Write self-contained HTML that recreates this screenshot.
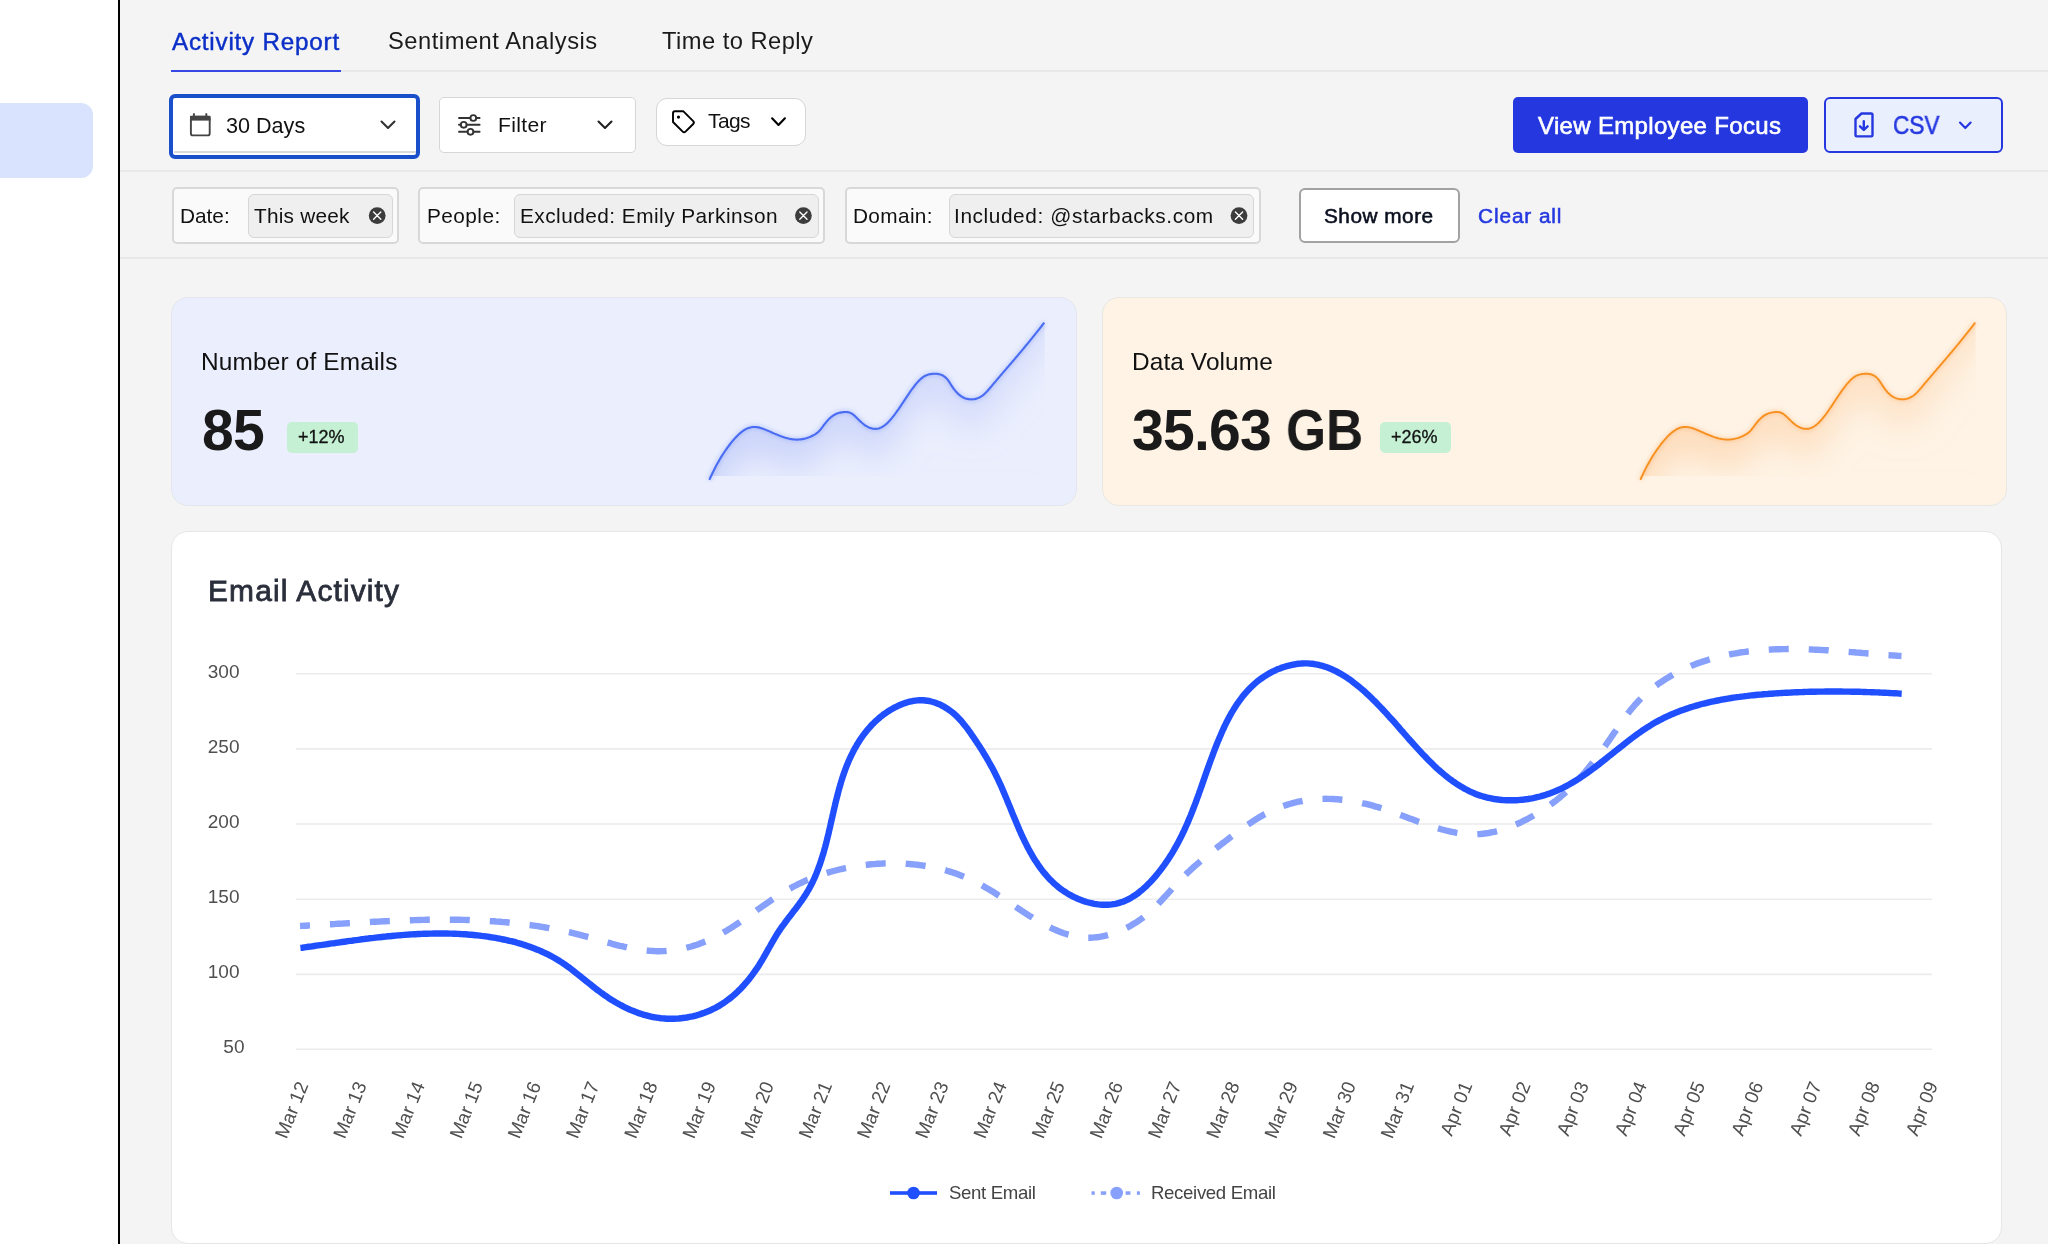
<!DOCTYPE html>
<html><head><meta charset="utf-8">
<style>
*{margin:0;padding:0;box-sizing:border-box}
html,body{width:2048px;height:1244px;overflow:hidden;background:#f4f4f4;font-family:"Liberation Sans",sans-serif;color:#111}
.a{position:absolute}
.t{position:absolute;white-space:nowrap;line-height:1;will-change:transform}
.sep{position:absolute;left:120px;width:1928px;height:2px;background:#e8e8e8}
.sb{-webkit-text-stroke:0.55px currentColor}
.mb{-webkit-text-stroke:0.3px currentColor}
</style></head><body>
<!-- sidebar -->
<div class="a" style="left:0;top:0;width:118px;height:1244px;background:#fff"></div>
<div class="a" style="left:-20px;top:103px;width:113px;height:75px;background:#dae3fd;border-radius:12px"></div>
<div class="a" style="left:118px;top:0;width:2px;height:1244px;background:#000"></div>

<!-- tabs -->
<div class="a" style="left:171px;top:70px;width:1877px;height:2px;background:#e8e8e8"></div>
<div class="a" style="left:171px;top:69.5px;width:170px;height:2.5px;background:#3548e6"></div>
<div class="t" style="left:172px;top:29.6px;font-size:24.2px;letter-spacing:0.8px;color:#0b2fc7;-webkit-text-stroke:0.45px #0b2fc7">Activity Report</div>
<div class="t" style="left:388px;top:30px;font-size:23.7px;letter-spacing:0.53px;color:#1a1a1a">Sentiment Analysis</div>
<div class="t" style="left:662px;top:30px;font-size:23.7px;letter-spacing:0.47px;color:#1a1a1a">Time to Reply</div>

<!-- toolbar -->
<div class="sep" style="top:170px"></div>
<div class="a" style="left:169px;top:93.5px;width:251px;height:65.5px;border:4.5px solid #1a4fcc;border-radius:6px;background:#fff"></div>
<div class="a" style="left:173.5px;top:151px;width:242px;height:1.5px;background:#d9d9d9"></div>
<svg class="a" style="left:180px;top:100px" width="40" height="50" viewBox="180 100 40 50">
 <rect x="190.9" y="116.6" width="18.8" height="18.8" rx="2" fill="none" stroke="#444" stroke-width="1.9"/>
 <rect x="190" y="115.8" width="20.5" height="4.8" fill="#444"/>
 <path d="M193.9 113.2V117M206.3 113.2V117" stroke="#444" stroke-width="1.9"/>
</svg>
<div class="t" style="left:226px;top:114.5px;font-size:21.6px;color:#111">30 Days</div>
<svg class="a" style="left:370px;top:110px" width="40" height="30" viewBox="370 110 40 30"><path d="M381.5 121.5L388 128L394.5 121.5" fill="none" stroke="#333" stroke-width="2.1" stroke-linecap="round" stroke-linejoin="round"/></svg>

<div class="a" style="left:438.5px;top:97px;width:197px;height:55.5px;border:1.5px solid #d6d6d6;border-radius:5px;background:#fff"></div>
<svg class="a" style="left:450px;top:100px" width="40" height="50" viewBox="450 100 40 50" fill="none" stroke="#333" stroke-width="1.9" stroke-linecap="round">
 <path d="M459 118H470.3M476.3 118H479.6"/>
 <path d="M459 124.8H460.7M466.7 124.8H479.6"/>
 <path d="M459 131.8H467.5M473.5 131.8H479.6"/>
 <circle cx="473.3" cy="118" r="2.9"/><circle cx="463.7" cy="124.8" r="2.9"/><circle cx="470.5" cy="131.8" r="2.9"/>
</svg>
<div class="t" style="left:497.8px;top:114px;font-size:21.1px;letter-spacing:0.32px;color:#111">Filter</div>
<svg class="a" style="left:590px;top:110px" width="30" height="30" viewBox="590 110 30 30"><path d="M598.5 121.5L605 128L611.5 121.5" fill="none" stroke="#222" stroke-width="2.1" stroke-linecap="round" stroke-linejoin="round"/></svg>

<div class="a" style="left:656px;top:97.5px;width:150px;height:48.5px;border:1.5px solid #d6d6d6;border-radius:11px;background:#fff"></div>
<svg class="a" style="left:660px;top:100px" width="40" height="40" viewBox="660 100 40 40">
 <path d="M673 113.2Q673 111.2 675 111.2H683.2L693.2 121.2Q694.6 122.6 693.2 124L685.5 131.7Q684.1 133.1 682.7 131.7L673 122Z" fill="none" stroke="#000" stroke-width="1.9" stroke-linejoin="round"/>
 <circle cx="678.5" cy="117.1" r="1.6" fill="#000"/>
</svg>
<div class="t" style="left:708px;top:111.2px;font-size:20.95px;letter-spacing:-0.57px;color:#111">Tags</div>
<svg class="a" style="left:765px;top:110px" width="30" height="30" viewBox="765 110 30 30"><path d="M772.1 118.3L778.5 124.9L784.9 118.3" fill="none" stroke="#000" stroke-width="2.1" stroke-linecap="round" stroke-linejoin="round"/></svg>

<div class="a" style="left:1512.5px;top:97px;width:295px;height:55.5px;background:#2538e0;border-radius:5px"></div>
<div class="t" style="left:1538px;top:114.2px;font-size:24px;letter-spacing:0.33px;color:#fff;-webkit-text-stroke:0.6px #fff">View Employee Focus</div>
<div class="a" style="left:1823.5px;top:97px;width:179px;height:55.5px;background:#eaeffd;border:2px solid #2538e0;border-radius:6px"></div>
<svg class="a" style="left:1845px;top:105px" width="40" height="40" viewBox="1845 105 40 40" fill="none" stroke="#2538e0" stroke-width="2.4" stroke-linejoin="round" stroke-linecap="round">
 <path d="M1855.5 119L1861.5 113.5H1871.2Q1872.5 113.5 1872.5 114.8V135.2Q1872.5 136.4 1871.2 136.4H1856.8Q1855.5 136.4 1855.5 135.2Z"/>
 <path d="M1863.8 121.3V129M1860 126.3L1863.8 130L1867.6 126.3"/>
</svg>
<div class="t sb" style="left:1892.5px;top:113.3px;font-size:25px;color:#2538e0;transform:scaleX(0.905);transform-origin:0 0">CSV</div>
<svg class="a" style="left:1950px;top:110px" width="30" height="30" viewBox="1950 110 30 30"><path d="M1960 122.6L1965.3 128L1970.6 122.6" fill="none" stroke="#2538e0" stroke-width="2.2" stroke-linecap="round" stroke-linejoin="round"/></svg>

<!-- filter chips -->
<div class="sep" style="top:257px"></div>
<div class="a" style="left:171.5px;top:187px;width:227px;height:56.5px;background:#fafafa;border:2px solid #d8d8d8;border-radius:5px"></div>
<div class="a" style="left:247.5px;top:193.5px;width:145px;height:44px;background:#efefef;border:1.5px solid #d6d6d6;border-radius:6px"></div>
<div class="t" style="left:180px;top:205.9px;font-size:20.8px;color:#111">Date:</div>
<div class="t" style="left:254px;top:205.9px;font-size:20.8px;letter-spacing:0.22px;color:#111">This week</div>

<div class="a" style="left:418px;top:187px;width:407px;height:56.5px;background:#fafafa;border:2px solid #d8d8d8;border-radius:5px"></div>
<div class="a" style="left:514px;top:193.5px;width:304.5px;height:44px;background:#efefef;border:1.5px solid #d6d6d6;border-radius:6px"></div>
<div class="t" style="left:427px;top:205.9px;font-size:20.8px;letter-spacing:0.45px;color:#111">People:</div>
<div class="t" style="left:520px;top:205.9px;font-size:20.8px;letter-spacing:0.47px;color:#111">Excluded: Emily Parkinson</div>

<div class="a" style="left:845px;top:187px;width:415.5px;height:56.5px;background:#fafafa;border:2px solid #d8d8d8;border-radius:5px"></div>
<div class="a" style="left:948.5px;top:193.5px;width:305.5px;height:44px;background:#efefef;border:1.5px solid #d6d6d6;border-radius:6px"></div>
<div class="t" style="left:853px;top:205.9px;font-size:20.8px;letter-spacing:0.35px;color:#111">Domain:</div>
<div class="t" style="left:954px;top:205.9px;font-size:20.8px;letter-spacing:0.6px;color:#111">Included: @starbacks.com</div>

<svg class="a" style="left:0;top:180px" width="1300" height="70" viewBox="0 180 1300 70">
 <g fill="#3c3c3c"><circle cx="377.2" cy="215.6" r="8.4"/><circle cx="803.4" cy="215.6" r="8.4"/><circle cx="1239" cy="215.6" r="8.4"/></g>
 <g stroke="#fff" stroke-width="1.35" stroke-linecap="round">
  <path d="M373.6 212L380.8 219.2M380.8 212L373.6 219.2"/>
  <path d="M799.8 212L807 219.2M807 212L799.8 219.2"/>
  <path d="M1235.4 212L1242.6 219.2M1242.6 212L1235.4 219.2"/>
 </g>
</svg>

<div class="a" style="left:1298.5px;top:187.5px;width:161px;height:55.5px;background:#fff;border:2px solid #a2a2a2;border-radius:6px"></div>
<div class="t sb" style="left:1324px;top:205.9px;font-size:20.8px;letter-spacing:0.5px;color:#0a0f1e">Show more</div>
<div class="t sb" style="left:1478px;top:205.9px;font-size:20.8px;letter-spacing:0.9px;color:#2538e0">Clear all</div>

<!-- KPI cards -->
<div class="a" style="left:171px;top:296.5px;width:905.5px;height:209px;background:#eaeefd;border:1.5px solid #e3e6ee;border-radius:17px"></div>
<div class="a" style="left:1102px;top:296.5px;width:905px;height:209px;background:#fef3e5;border:1.5px solid #e9e7e3;border-radius:17px"></div>

<svg class="a" style="left:0;top:280px" width="2048" height="230" viewBox="0 280 2048 230">
 <defs>
  <linearGradient id="g1" gradientUnits="userSpaceOnUse" x1="709" y1="0" x2="1045" y2="0">
   <stop offset="0" stop-color="#cbd4fa" stop-opacity="1"/>
   <stop offset="1" stop-color="#cbd4fa" stop-opacity="0.55"/>
  </linearGradient>
  <linearGradient id="g2" gradientUnits="userSpaceOnUse" x1="1640" y1="0" x2="1976" y2="0">
   <stop offset="0" stop-color="#fdd9b5" stop-opacity="0.85"/>
   <stop offset="1" stop-color="#fdd9b5" stop-opacity="0.5"/>
  </linearGradient>
  <filter id="fd" x="-5%" y="-5%" width="110%" height="140%">
   <feOffset in="SourceAlpha" dy="30" result="off"/>
   <feComponentTransfer in="off" result="offs"><feFuncA type="linear" slope="20"/></feComponentTransfer>
   <feGaussianBlur in="offs" stdDeviation="15" result="bl"/>
   <feComposite in="SourceGraphic" in2="bl" operator="out"/>
  </filter>
  <filter id="blur2" x="-10%" y="-10%" width="120%" height="120%"><feGaussianBlur stdDeviation="2.2"/></filter>
 </defs>
 <clipPath id="c1"><rect x="700" y="300" width="344.6" height="200"/></clipPath><g clip-path="url(#c1)"><path d="M709.4,479.8 L710.4,477.5 L711.4,475.4 L712.4,473.2 L713.4,471.2 L714.4,469.2 L715.4,467.2 L716.4,465.3 L717.4,463.5 L718.4,461.7 L719.4,460.0 L720.4,458.3 L721.4,456.6 L722.4,455.0 L723.4,453.5 L724.4,452.0 L725.4,450.5 L726.4,449.1 L727.4,447.7 L728.4,446.3 L729.4,445.0 L730.4,443.7 L731.4,442.4 L732.4,441.2 L733.4,440.0 L734.4,438.9 L735.4,437.8 L736.4,436.7 L737.4,435.7 L738.4,434.7 L739.4,433.8 L740.4,432.9 L741.4,432.1 L742.4,431.4 L743.4,430.7 L744.4,430.0 L745.4,429.4 L746.4,428.9 L747.4,428.4 L748.4,428.0 L749.4,427.7 L750.4,427.4 L751.4,427.2 L752.4,427.0 L753.4,427.0 L754.4,427.0 L755.4,427.0 L756.4,427.1 L757.4,427.2 L758.4,427.4 L759.4,427.6 L760.4,427.9 L761.4,428.2 L762.4,428.5 L763.4,428.9 L764.4,429.2 L765.4,429.6 L766.4,430.1 L767.4,430.5 L768.4,430.9 L769.4,431.4 L770.4,431.8 L771.4,432.2 L772.4,432.7 L773.4,433.1 L774.4,433.6 L775.4,434.0 L776.4,434.4 L777.4,434.8 L778.4,435.2 L779.4,435.6 L780.4,436.0 L781.4,436.4 L782.4,436.8 L783.4,437.1 L784.4,437.4 L785.4,437.8 L786.4,438.0 L787.4,438.3 L788.4,438.6 L789.4,438.8 L790.4,439.0 L791.4,439.1 L792.4,439.3 L793.4,439.4 L794.4,439.5 L795.4,439.5 L796.4,439.6 L797.4,439.6 L798.4,439.5 L799.4,439.5 L800.4,439.4 L801.4,439.3 L802.4,439.1 L803.4,438.9 L804.4,438.7 L805.4,438.4 L806.4,438.2 L807.4,437.8 L808.4,437.5 L809.4,437.1 L810.4,436.7 L811.4,436.2 L812.4,435.8 L813.4,435.2 L814.4,434.7 L815.4,434.1 L816.4,433.4 L817.4,432.7 L818.4,431.8 L819.4,430.8 L820.4,429.7 L821.4,428.4 L822.4,427.1 L823.4,425.7 L824.4,424.4 L825.4,423.1 L826.4,421.8 L827.4,420.7 L828.4,419.6 L829.4,418.6 L830.4,417.7 L831.4,416.8 L832.4,416.1 L833.4,415.4 L834.4,414.8 L835.4,414.3 L836.4,413.8 L837.4,413.4 L838.4,413.1 L839.4,412.8 L840.4,412.6 L841.4,412.4 L842.4,412.2 L843.4,412.1 L844.4,412.0 L845.4,412.0 L846.4,412.0 L847.4,412.1 L848.4,412.2 L849.4,412.5 L850.4,412.9 L851.4,413.4 L852.4,414.0 L853.4,414.7 L854.4,415.6 L855.4,416.5 L856.4,417.4 L857.4,418.4 L858.4,419.4 L859.4,420.4 L860.4,421.4 L861.4,422.3 L862.4,423.2 L863.4,424.0 L864.4,424.8 L865.4,425.5 L866.4,426.1 L867.4,426.7 L868.4,427.2 L869.4,427.7 L870.4,428.0 L871.4,428.3 L872.4,428.6 L873.4,428.7 L874.4,428.8 L875.4,428.9 L876.4,428.8 L877.4,428.7 L878.4,428.5 L879.4,428.2 L880.4,427.8 L881.4,427.4 L882.4,426.8 L883.4,426.2 L884.4,425.5 L885.4,424.7 L886.4,423.9 L887.4,423.0 L888.4,422.0 L889.4,420.9 L890.4,419.8 L891.4,418.6 L892.4,417.4 L893.4,416.2 L894.4,414.9 L895.4,413.5 L896.4,412.1 L897.4,410.7 L898.4,409.3 L899.4,407.8 L900.4,406.3 L901.4,404.9 L902.4,403.3 L903.4,401.8 L904.4,400.3 L905.4,398.8 L906.4,397.3 L907.4,395.8 L908.4,394.3 L909.4,392.9 L910.4,391.4 L911.4,390.0 L912.4,388.6 L913.4,387.3 L914.4,386.0 L915.4,384.7 L916.4,383.5 L917.4,382.4 L918.4,381.3 L919.4,380.2 L920.4,379.3 L921.4,378.4 L922.4,377.6 L923.4,376.9 L924.4,376.2 L925.4,375.7 L926.4,375.3 L927.4,374.9 L928.4,374.6 L929.4,374.3 L930.4,374.1 L931.4,374.0 L932.4,373.9 L933.4,373.8 L934.4,373.8 L935.4,373.8 L936.4,373.8 L937.4,373.9 L938.4,374.0 L939.4,374.2 L940.4,374.5 L941.4,374.9 L942.4,375.3 L943.4,375.9 L944.4,376.5 L945.4,377.4 L946.4,378.3 L947.4,379.4 L948.4,380.7 L949.4,382.2 L950.4,383.7 L951.4,385.4 L952.4,386.9 L953.4,388.4 L954.4,389.7 L955.4,390.9 L956.4,392.1 L957.4,393.1 L958.4,394.1 L959.4,394.9 L960.4,395.7 L961.4,396.4 L962.4,397.0 L963.4,397.5 L964.4,398.0 L965.4,398.4 L966.4,398.7 L967.4,398.9 L968.4,399.1 L969.4,399.3 L970.4,399.3 L971.4,399.4 L972.4,399.3 L973.4,399.2 L974.4,399.1 L975.4,398.9 L976.4,398.7 L977.4,398.3 L978.4,397.9 L979.4,397.5 L980.4,396.9 L981.4,396.3 L982.4,395.7 L983.4,394.9 L984.4,394.0 L985.4,393.1 L986.4,392.1 L987.4,391.0 L988.4,389.8 L989.4,388.7 L990.4,387.5 L991.4,386.3 L992.4,385.1 L993.4,383.9 L994.4,382.7 L995.4,381.6 L996.4,380.4 L997.4,379.2 L998.4,378.0 L999.4,376.9 L1000.4,375.7 L1001.4,374.5 L1002.4,373.4 L1003.4,372.2 L1004.4,371.0 L1005.4,369.9 L1006.4,368.7 L1007.4,367.5 L1008.4,366.4 L1009.4,365.2 L1010.4,364.0 L1011.4,362.9 L1012.4,361.7 L1013.4,360.5 L1014.4,359.4 L1015.4,358.2 L1016.4,357.0 L1017.4,355.8 L1018.4,354.6 L1019.4,353.4 L1020.4,352.3 L1021.4,351.1 L1022.4,349.9 L1023.4,348.7 L1024.4,347.5 L1025.4,346.2 L1026.4,345.0 L1027.4,343.8 L1028.4,342.6 L1029.4,341.4 L1030.4,340.1 L1031.4,338.9 L1032.4,337.7 L1033.4,336.4 L1034.4,335.2 L1035.4,333.9 L1036.4,332.7 L1037.4,331.4 L1038.4,330.1 L1039.4,328.9 L1040.4,327.6 L1041.4,326.3 L1042.4,325.0 L1043.4,323.7 L1044.2,322.7 L1104.2,250.7 L1104.2,516.0 L1044.2,476.0 L709.4,476.0 Z" fill="url(#g1)" filter="url(#fd)"/></g>
 <path d="M709.4,479.8 L710.4,477.5 L711.4,475.4 L712.4,473.2 L713.4,471.2 L714.4,469.2 L715.4,467.2 L716.4,465.3 L717.4,463.5 L718.4,461.7 L719.4,460.0 L720.4,458.3 L721.4,456.6 L722.4,455.0 L723.4,453.5 L724.4,452.0 L725.4,450.5 L726.4,449.1 L727.4,447.7 L728.4,446.3 L729.4,445.0 L730.4,443.7 L731.4,442.4 L732.4,441.2 L733.4,440.0 L734.4,438.9 L735.4,437.8 L736.4,436.7 L737.4,435.7 L738.4,434.7 L739.4,433.8 L740.4,432.9 L741.4,432.1 L742.4,431.4 L743.4,430.7 L744.4,430.0 L745.4,429.4 L746.4,428.9 L747.4,428.4 L748.4,428.0 L749.4,427.7 L750.4,427.4 L751.4,427.2 L752.4,427.0 L753.4,427.0 L754.4,427.0 L755.4,427.0 L756.4,427.1 L757.4,427.2 L758.4,427.4 L759.4,427.6 L760.4,427.9 L761.4,428.2 L762.4,428.5 L763.4,428.9 L764.4,429.2 L765.4,429.6 L766.4,430.1 L767.4,430.5 L768.4,430.9 L769.4,431.4 L770.4,431.8 L771.4,432.2 L772.4,432.7 L773.4,433.1 L774.4,433.6 L775.4,434.0 L776.4,434.4 L777.4,434.8 L778.4,435.2 L779.4,435.6 L780.4,436.0 L781.4,436.4 L782.4,436.8 L783.4,437.1 L784.4,437.4 L785.4,437.8 L786.4,438.0 L787.4,438.3 L788.4,438.6 L789.4,438.8 L790.4,439.0 L791.4,439.1 L792.4,439.3 L793.4,439.4 L794.4,439.5 L795.4,439.5 L796.4,439.6 L797.4,439.6 L798.4,439.5 L799.4,439.5 L800.4,439.4 L801.4,439.3 L802.4,439.1 L803.4,438.9 L804.4,438.7 L805.4,438.4 L806.4,438.2 L807.4,437.8 L808.4,437.5 L809.4,437.1 L810.4,436.7 L811.4,436.2 L812.4,435.8 L813.4,435.2 L814.4,434.7 L815.4,434.1 L816.4,433.4 L817.4,432.7 L818.4,431.8 L819.4,430.8 L820.4,429.7 L821.4,428.4 L822.4,427.1 L823.4,425.7 L824.4,424.4 L825.4,423.1 L826.4,421.8 L827.4,420.7 L828.4,419.6 L829.4,418.6 L830.4,417.7 L831.4,416.8 L832.4,416.1 L833.4,415.4 L834.4,414.8 L835.4,414.3 L836.4,413.8 L837.4,413.4 L838.4,413.1 L839.4,412.8 L840.4,412.6 L841.4,412.4 L842.4,412.2 L843.4,412.1 L844.4,412.0 L845.4,412.0 L846.4,412.0 L847.4,412.1 L848.4,412.2 L849.4,412.5 L850.4,412.9 L851.4,413.4 L852.4,414.0 L853.4,414.7 L854.4,415.6 L855.4,416.5 L856.4,417.4 L857.4,418.4 L858.4,419.4 L859.4,420.4 L860.4,421.4 L861.4,422.3 L862.4,423.2 L863.4,424.0 L864.4,424.8 L865.4,425.5 L866.4,426.1 L867.4,426.7 L868.4,427.2 L869.4,427.7 L870.4,428.0 L871.4,428.3 L872.4,428.6 L873.4,428.7 L874.4,428.8 L875.4,428.9 L876.4,428.8 L877.4,428.7 L878.4,428.5 L879.4,428.2 L880.4,427.8 L881.4,427.4 L882.4,426.8 L883.4,426.2 L884.4,425.5 L885.4,424.7 L886.4,423.9 L887.4,423.0 L888.4,422.0 L889.4,420.9 L890.4,419.8 L891.4,418.6 L892.4,417.4 L893.4,416.2 L894.4,414.9 L895.4,413.5 L896.4,412.1 L897.4,410.7 L898.4,409.3 L899.4,407.8 L900.4,406.3 L901.4,404.9 L902.4,403.3 L903.4,401.8 L904.4,400.3 L905.4,398.8 L906.4,397.3 L907.4,395.8 L908.4,394.3 L909.4,392.9 L910.4,391.4 L911.4,390.0 L912.4,388.6 L913.4,387.3 L914.4,386.0 L915.4,384.7 L916.4,383.5 L917.4,382.4 L918.4,381.3 L919.4,380.2 L920.4,379.3 L921.4,378.4 L922.4,377.6 L923.4,376.9 L924.4,376.2 L925.4,375.7 L926.4,375.3 L927.4,374.9 L928.4,374.6 L929.4,374.3 L930.4,374.1 L931.4,374.0 L932.4,373.9 L933.4,373.8 L934.4,373.8 L935.4,373.8 L936.4,373.8 L937.4,373.9 L938.4,374.0 L939.4,374.2 L940.4,374.5 L941.4,374.9 L942.4,375.3 L943.4,375.9 L944.4,376.5 L945.4,377.4 L946.4,378.3 L947.4,379.4 L948.4,380.7 L949.4,382.2 L950.4,383.7 L951.4,385.4 L952.4,386.9 L953.4,388.4 L954.4,389.7 L955.4,390.9 L956.4,392.1 L957.4,393.1 L958.4,394.1 L959.4,394.9 L960.4,395.7 L961.4,396.4 L962.4,397.0 L963.4,397.5 L964.4,398.0 L965.4,398.4 L966.4,398.7 L967.4,398.9 L968.4,399.1 L969.4,399.3 L970.4,399.3 L971.4,399.4 L972.4,399.3 L973.4,399.2 L974.4,399.1 L975.4,398.9 L976.4,398.7 L977.4,398.3 L978.4,397.9 L979.4,397.5 L980.4,396.9 L981.4,396.3 L982.4,395.7 L983.4,394.9 L984.4,394.0 L985.4,393.1 L986.4,392.1 L987.4,391.0 L988.4,389.8 L989.4,388.7 L990.4,387.5 L991.4,386.3 L992.4,385.1 L993.4,383.9 L994.4,382.7 L995.4,381.6 L996.4,380.4 L997.4,379.2 L998.4,378.0 L999.4,376.9 L1000.4,375.7 L1001.4,374.5 L1002.4,373.4 L1003.4,372.2 L1004.4,371.0 L1005.4,369.9 L1006.4,368.7 L1007.4,367.5 L1008.4,366.4 L1009.4,365.2 L1010.4,364.0 L1011.4,362.9 L1012.4,361.7 L1013.4,360.5 L1014.4,359.4 L1015.4,358.2 L1016.4,357.0 L1017.4,355.8 L1018.4,354.6 L1019.4,353.4 L1020.4,352.3 L1021.4,351.1 L1022.4,349.9 L1023.4,348.7 L1024.4,347.5 L1025.4,346.2 L1026.4,345.0 L1027.4,343.8 L1028.4,342.6 L1029.4,341.4 L1030.4,340.1 L1031.4,338.9 L1032.4,337.7 L1033.4,336.4 L1034.4,335.2 L1035.4,333.9 L1036.4,332.7 L1037.4,331.4 L1038.4,330.1 L1039.4,328.9 L1040.4,327.6 L1041.4,326.3 L1042.4,325.0 L1043.4,323.7 L1044.2,322.7" fill="none" stroke="#6f8cf6" stroke-width="4" opacity="0.35" filter="url(#blur2)"/>
 <path d="M709.4,479.8 L710.4,477.5 L711.4,475.4 L712.4,473.2 L713.4,471.2 L714.4,469.2 L715.4,467.2 L716.4,465.3 L717.4,463.5 L718.4,461.7 L719.4,460.0 L720.4,458.3 L721.4,456.6 L722.4,455.0 L723.4,453.5 L724.4,452.0 L725.4,450.5 L726.4,449.1 L727.4,447.7 L728.4,446.3 L729.4,445.0 L730.4,443.7 L731.4,442.4 L732.4,441.2 L733.4,440.0 L734.4,438.9 L735.4,437.8 L736.4,436.7 L737.4,435.7 L738.4,434.7 L739.4,433.8 L740.4,432.9 L741.4,432.1 L742.4,431.4 L743.4,430.7 L744.4,430.0 L745.4,429.4 L746.4,428.9 L747.4,428.4 L748.4,428.0 L749.4,427.7 L750.4,427.4 L751.4,427.2 L752.4,427.0 L753.4,427.0 L754.4,427.0 L755.4,427.0 L756.4,427.1 L757.4,427.2 L758.4,427.4 L759.4,427.6 L760.4,427.9 L761.4,428.2 L762.4,428.5 L763.4,428.9 L764.4,429.2 L765.4,429.6 L766.4,430.1 L767.4,430.5 L768.4,430.9 L769.4,431.4 L770.4,431.8 L771.4,432.2 L772.4,432.7 L773.4,433.1 L774.4,433.6 L775.4,434.0 L776.4,434.4 L777.4,434.8 L778.4,435.2 L779.4,435.6 L780.4,436.0 L781.4,436.4 L782.4,436.8 L783.4,437.1 L784.4,437.4 L785.4,437.8 L786.4,438.0 L787.4,438.3 L788.4,438.6 L789.4,438.8 L790.4,439.0 L791.4,439.1 L792.4,439.3 L793.4,439.4 L794.4,439.5 L795.4,439.5 L796.4,439.6 L797.4,439.6 L798.4,439.5 L799.4,439.5 L800.4,439.4 L801.4,439.3 L802.4,439.1 L803.4,438.9 L804.4,438.7 L805.4,438.4 L806.4,438.2 L807.4,437.8 L808.4,437.5 L809.4,437.1 L810.4,436.7 L811.4,436.2 L812.4,435.8 L813.4,435.2 L814.4,434.7 L815.4,434.1 L816.4,433.4 L817.4,432.7 L818.4,431.8 L819.4,430.8 L820.4,429.7 L821.4,428.4 L822.4,427.1 L823.4,425.7 L824.4,424.4 L825.4,423.1 L826.4,421.8 L827.4,420.7 L828.4,419.6 L829.4,418.6 L830.4,417.7 L831.4,416.8 L832.4,416.1 L833.4,415.4 L834.4,414.8 L835.4,414.3 L836.4,413.8 L837.4,413.4 L838.4,413.1 L839.4,412.8 L840.4,412.6 L841.4,412.4 L842.4,412.2 L843.4,412.1 L844.4,412.0 L845.4,412.0 L846.4,412.0 L847.4,412.1 L848.4,412.2 L849.4,412.5 L850.4,412.9 L851.4,413.4 L852.4,414.0 L853.4,414.7 L854.4,415.6 L855.4,416.5 L856.4,417.4 L857.4,418.4 L858.4,419.4 L859.4,420.4 L860.4,421.4 L861.4,422.3 L862.4,423.2 L863.4,424.0 L864.4,424.8 L865.4,425.5 L866.4,426.1 L867.4,426.7 L868.4,427.2 L869.4,427.7 L870.4,428.0 L871.4,428.3 L872.4,428.6 L873.4,428.7 L874.4,428.8 L875.4,428.9 L876.4,428.8 L877.4,428.7 L878.4,428.5 L879.4,428.2 L880.4,427.8 L881.4,427.4 L882.4,426.8 L883.4,426.2 L884.4,425.5 L885.4,424.7 L886.4,423.9 L887.4,423.0 L888.4,422.0 L889.4,420.9 L890.4,419.8 L891.4,418.6 L892.4,417.4 L893.4,416.2 L894.4,414.9 L895.4,413.5 L896.4,412.1 L897.4,410.7 L898.4,409.3 L899.4,407.8 L900.4,406.3 L901.4,404.9 L902.4,403.3 L903.4,401.8 L904.4,400.3 L905.4,398.8 L906.4,397.3 L907.4,395.8 L908.4,394.3 L909.4,392.9 L910.4,391.4 L911.4,390.0 L912.4,388.6 L913.4,387.3 L914.4,386.0 L915.4,384.7 L916.4,383.5 L917.4,382.4 L918.4,381.3 L919.4,380.2 L920.4,379.3 L921.4,378.4 L922.4,377.6 L923.4,376.9 L924.4,376.2 L925.4,375.7 L926.4,375.3 L927.4,374.9 L928.4,374.6 L929.4,374.3 L930.4,374.1 L931.4,374.0 L932.4,373.9 L933.4,373.8 L934.4,373.8 L935.4,373.8 L936.4,373.8 L937.4,373.9 L938.4,374.0 L939.4,374.2 L940.4,374.5 L941.4,374.9 L942.4,375.3 L943.4,375.9 L944.4,376.5 L945.4,377.4 L946.4,378.3 L947.4,379.4 L948.4,380.7 L949.4,382.2 L950.4,383.7 L951.4,385.4 L952.4,386.9 L953.4,388.4 L954.4,389.7 L955.4,390.9 L956.4,392.1 L957.4,393.1 L958.4,394.1 L959.4,394.9 L960.4,395.7 L961.4,396.4 L962.4,397.0 L963.4,397.5 L964.4,398.0 L965.4,398.4 L966.4,398.7 L967.4,398.9 L968.4,399.1 L969.4,399.3 L970.4,399.3 L971.4,399.4 L972.4,399.3 L973.4,399.2 L974.4,399.1 L975.4,398.9 L976.4,398.7 L977.4,398.3 L978.4,397.9 L979.4,397.5 L980.4,396.9 L981.4,396.3 L982.4,395.7 L983.4,394.9 L984.4,394.0 L985.4,393.1 L986.4,392.1 L987.4,391.0 L988.4,389.8 L989.4,388.7 L990.4,387.5 L991.4,386.3 L992.4,385.1 L993.4,383.9 L994.4,382.7 L995.4,381.6 L996.4,380.4 L997.4,379.2 L998.4,378.0 L999.4,376.9 L1000.4,375.7 L1001.4,374.5 L1002.4,373.4 L1003.4,372.2 L1004.4,371.0 L1005.4,369.9 L1006.4,368.7 L1007.4,367.5 L1008.4,366.4 L1009.4,365.2 L1010.4,364.0 L1011.4,362.9 L1012.4,361.7 L1013.4,360.5 L1014.4,359.4 L1015.4,358.2 L1016.4,357.0 L1017.4,355.8 L1018.4,354.6 L1019.4,353.4 L1020.4,352.3 L1021.4,351.1 L1022.4,349.9 L1023.4,348.7 L1024.4,347.5 L1025.4,346.2 L1026.4,345.0 L1027.4,343.8 L1028.4,342.6 L1029.4,341.4 L1030.4,340.1 L1031.4,338.9 L1032.4,337.7 L1033.4,336.4 L1034.4,335.2 L1035.4,333.9 L1036.4,332.7 L1037.4,331.4 L1038.4,330.1 L1039.4,328.9 L1040.4,327.6 L1041.4,326.3 L1042.4,325.0 L1043.4,323.7 L1044.2,322.7" fill="none" stroke="#4a6cf2" stroke-width="2.1"/>
 <clipPath id="c2"><rect x="1631" y="300" width="344.6" height="200"/></clipPath><g clip-path="url(#c2)"><path d="M1640.4,479.8 L1641.4,477.5 L1642.4,475.4 L1643.4,473.2 L1644.4,471.2 L1645.4,469.2 L1646.4,467.2 L1647.4,465.3 L1648.4,463.5 L1649.4,461.7 L1650.4,460.0 L1651.4,458.3 L1652.4,456.6 L1653.4,455.0 L1654.4,453.5 L1655.4,452.0 L1656.4,450.5 L1657.4,449.1 L1658.4,447.7 L1659.4,446.3 L1660.4,445.0 L1661.4,443.7 L1662.4,442.4 L1663.4,441.2 L1664.4,440.0 L1665.4,438.9 L1666.4,437.8 L1667.4,436.7 L1668.4,435.7 L1669.4,434.7 L1670.4,433.8 L1671.4,432.9 L1672.4,432.1 L1673.4,431.4 L1674.4,430.7 L1675.4,430.0 L1676.4,429.4 L1677.4,428.9 L1678.4,428.4 L1679.4,428.0 L1680.4,427.7 L1681.4,427.4 L1682.4,427.2 L1683.4,427.0 L1684.4,427.0 L1685.4,427.0 L1686.4,427.0 L1687.4,427.1 L1688.4,427.2 L1689.4,427.4 L1690.4,427.6 L1691.4,427.9 L1692.4,428.2 L1693.4,428.5 L1694.4,428.9 L1695.4,429.2 L1696.4,429.6 L1697.4,430.1 L1698.4,430.5 L1699.4,430.9 L1700.4,431.4 L1701.4,431.8 L1702.4,432.2 L1703.4,432.7 L1704.4,433.1 L1705.4,433.6 L1706.4,434.0 L1707.4,434.4 L1708.4,434.8 L1709.4,435.2 L1710.4,435.6 L1711.4,436.0 L1712.4,436.4 L1713.4,436.8 L1714.4,437.1 L1715.4,437.4 L1716.4,437.8 L1717.4,438.0 L1718.4,438.3 L1719.4,438.6 L1720.4,438.8 L1721.4,439.0 L1722.4,439.1 L1723.4,439.3 L1724.4,439.4 L1725.4,439.5 L1726.4,439.5 L1727.4,439.6 L1728.4,439.6 L1729.4,439.5 L1730.4,439.5 L1731.4,439.4 L1732.4,439.3 L1733.4,439.1 L1734.4,438.9 L1735.4,438.7 L1736.4,438.4 L1737.4,438.2 L1738.4,437.8 L1739.4,437.5 L1740.4,437.1 L1741.4,436.7 L1742.4,436.2 L1743.4,435.8 L1744.4,435.2 L1745.4,434.7 L1746.4,434.1 L1747.4,433.4 L1748.4,432.7 L1749.4,431.8 L1750.4,430.8 L1751.4,429.7 L1752.4,428.4 L1753.4,427.1 L1754.4,425.7 L1755.4,424.4 L1756.4,423.1 L1757.4,421.8 L1758.4,420.7 L1759.4,419.6 L1760.4,418.6 L1761.4,417.7 L1762.4,416.8 L1763.4,416.1 L1764.4,415.4 L1765.4,414.8 L1766.4,414.3 L1767.4,413.8 L1768.4,413.4 L1769.4,413.1 L1770.4,412.8 L1771.4,412.6 L1772.4,412.4 L1773.4,412.2 L1774.4,412.1 L1775.4,412.0 L1776.4,412.0 L1777.4,412.0 L1778.4,412.1 L1779.4,412.2 L1780.4,412.5 L1781.4,412.9 L1782.4,413.4 L1783.4,414.0 L1784.4,414.7 L1785.4,415.6 L1786.4,416.5 L1787.4,417.4 L1788.4,418.4 L1789.4,419.4 L1790.4,420.4 L1791.4,421.4 L1792.4,422.3 L1793.4,423.2 L1794.4,424.0 L1795.4,424.8 L1796.4,425.5 L1797.4,426.1 L1798.4,426.7 L1799.4,427.2 L1800.4,427.7 L1801.4,428.0 L1802.4,428.3 L1803.4,428.6 L1804.4,428.7 L1805.4,428.8 L1806.4,428.9 L1807.4,428.8 L1808.4,428.7 L1809.4,428.5 L1810.4,428.2 L1811.4,427.8 L1812.4,427.4 L1813.4,426.8 L1814.4,426.2 L1815.4,425.5 L1816.4,424.7 L1817.4,423.9 L1818.4,423.0 L1819.4,422.0 L1820.4,420.9 L1821.4,419.8 L1822.4,418.6 L1823.4,417.4 L1824.4,416.2 L1825.4,414.9 L1826.4,413.5 L1827.4,412.1 L1828.4,410.7 L1829.4,409.3 L1830.4,407.8 L1831.4,406.3 L1832.4,404.9 L1833.4,403.3 L1834.4,401.8 L1835.4,400.3 L1836.4,398.8 L1837.4,397.3 L1838.4,395.8 L1839.4,394.3 L1840.4,392.9 L1841.4,391.4 L1842.4,390.0 L1843.4,388.6 L1844.4,387.3 L1845.4,386.0 L1846.4,384.7 L1847.4,383.5 L1848.4,382.4 L1849.4,381.3 L1850.4,380.2 L1851.4,379.3 L1852.4,378.4 L1853.4,377.6 L1854.4,376.9 L1855.4,376.2 L1856.4,375.7 L1857.4,375.3 L1858.4,374.9 L1859.4,374.6 L1860.4,374.3 L1861.4,374.1 L1862.4,374.0 L1863.4,373.9 L1864.4,373.8 L1865.4,373.8 L1866.4,373.8 L1867.4,373.8 L1868.4,373.9 L1869.4,374.0 L1870.4,374.2 L1871.4,374.5 L1872.4,374.9 L1873.4,375.3 L1874.4,375.9 L1875.4,376.5 L1876.4,377.4 L1877.4,378.3 L1878.4,379.4 L1879.4,380.7 L1880.4,382.2 L1881.4,383.7 L1882.4,385.4 L1883.4,386.9 L1884.4,388.4 L1885.4,389.7 L1886.4,390.9 L1887.4,392.1 L1888.4,393.1 L1889.4,394.1 L1890.4,394.9 L1891.4,395.7 L1892.4,396.4 L1893.4,397.0 L1894.4,397.5 L1895.4,398.0 L1896.4,398.4 L1897.4,398.7 L1898.4,398.9 L1899.4,399.1 L1900.4,399.3 L1901.4,399.3 L1902.4,399.4 L1903.4,399.3 L1904.4,399.2 L1905.4,399.1 L1906.4,398.9 L1907.4,398.7 L1908.4,398.3 L1909.4,397.9 L1910.4,397.5 L1911.4,396.9 L1912.4,396.3 L1913.4,395.7 L1914.4,394.9 L1915.4,394.0 L1916.4,393.1 L1917.4,392.1 L1918.4,391.0 L1919.4,389.8 L1920.4,388.7 L1921.4,387.5 L1922.4,386.3 L1923.4,385.1 L1924.4,383.9 L1925.4,382.7 L1926.4,381.6 L1927.4,380.4 L1928.4,379.2 L1929.4,378.0 L1930.4,376.9 L1931.4,375.7 L1932.4,374.5 L1933.4,373.4 L1934.4,372.2 L1935.4,371.0 L1936.4,369.9 L1937.4,368.7 L1938.4,367.5 L1939.4,366.4 L1940.4,365.2 L1941.4,364.0 L1942.4,362.9 L1943.4,361.7 L1944.4,360.5 L1945.4,359.4 L1946.4,358.2 L1947.4,357.0 L1948.4,355.8 L1949.4,354.6 L1950.4,353.4 L1951.4,352.3 L1952.4,351.1 L1953.4,349.9 L1954.4,348.7 L1955.4,347.5 L1956.4,346.2 L1957.4,345.0 L1958.4,343.8 L1959.4,342.6 L1960.4,341.4 L1961.4,340.1 L1962.4,338.9 L1963.4,337.7 L1964.4,336.4 L1965.4,335.2 L1966.4,333.9 L1967.4,332.7 L1968.4,331.4 L1969.4,330.1 L1970.4,328.9 L1971.4,327.6 L1972.4,326.3 L1973.4,325.0 L1974.4,323.7 L1975.2,322.7 L2035.2,250.7 L2035.2,516.0 L1975.2,476.0 L1640.4,476.0 Z" fill="url(#g2)" filter="url(#fd)"/></g>
 <path d="M1640.4,479.8 L1641.4,477.5 L1642.4,475.4 L1643.4,473.2 L1644.4,471.2 L1645.4,469.2 L1646.4,467.2 L1647.4,465.3 L1648.4,463.5 L1649.4,461.7 L1650.4,460.0 L1651.4,458.3 L1652.4,456.6 L1653.4,455.0 L1654.4,453.5 L1655.4,452.0 L1656.4,450.5 L1657.4,449.1 L1658.4,447.7 L1659.4,446.3 L1660.4,445.0 L1661.4,443.7 L1662.4,442.4 L1663.4,441.2 L1664.4,440.0 L1665.4,438.9 L1666.4,437.8 L1667.4,436.7 L1668.4,435.7 L1669.4,434.7 L1670.4,433.8 L1671.4,432.9 L1672.4,432.1 L1673.4,431.4 L1674.4,430.7 L1675.4,430.0 L1676.4,429.4 L1677.4,428.9 L1678.4,428.4 L1679.4,428.0 L1680.4,427.7 L1681.4,427.4 L1682.4,427.2 L1683.4,427.0 L1684.4,427.0 L1685.4,427.0 L1686.4,427.0 L1687.4,427.1 L1688.4,427.2 L1689.4,427.4 L1690.4,427.6 L1691.4,427.9 L1692.4,428.2 L1693.4,428.5 L1694.4,428.9 L1695.4,429.2 L1696.4,429.6 L1697.4,430.1 L1698.4,430.5 L1699.4,430.9 L1700.4,431.4 L1701.4,431.8 L1702.4,432.2 L1703.4,432.7 L1704.4,433.1 L1705.4,433.6 L1706.4,434.0 L1707.4,434.4 L1708.4,434.8 L1709.4,435.2 L1710.4,435.6 L1711.4,436.0 L1712.4,436.4 L1713.4,436.8 L1714.4,437.1 L1715.4,437.4 L1716.4,437.8 L1717.4,438.0 L1718.4,438.3 L1719.4,438.6 L1720.4,438.8 L1721.4,439.0 L1722.4,439.1 L1723.4,439.3 L1724.4,439.4 L1725.4,439.5 L1726.4,439.5 L1727.4,439.6 L1728.4,439.6 L1729.4,439.5 L1730.4,439.5 L1731.4,439.4 L1732.4,439.3 L1733.4,439.1 L1734.4,438.9 L1735.4,438.7 L1736.4,438.4 L1737.4,438.2 L1738.4,437.8 L1739.4,437.5 L1740.4,437.1 L1741.4,436.7 L1742.4,436.2 L1743.4,435.8 L1744.4,435.2 L1745.4,434.7 L1746.4,434.1 L1747.4,433.4 L1748.4,432.7 L1749.4,431.8 L1750.4,430.8 L1751.4,429.7 L1752.4,428.4 L1753.4,427.1 L1754.4,425.7 L1755.4,424.4 L1756.4,423.1 L1757.4,421.8 L1758.4,420.7 L1759.4,419.6 L1760.4,418.6 L1761.4,417.7 L1762.4,416.8 L1763.4,416.1 L1764.4,415.4 L1765.4,414.8 L1766.4,414.3 L1767.4,413.8 L1768.4,413.4 L1769.4,413.1 L1770.4,412.8 L1771.4,412.6 L1772.4,412.4 L1773.4,412.2 L1774.4,412.1 L1775.4,412.0 L1776.4,412.0 L1777.4,412.0 L1778.4,412.1 L1779.4,412.2 L1780.4,412.5 L1781.4,412.9 L1782.4,413.4 L1783.4,414.0 L1784.4,414.7 L1785.4,415.6 L1786.4,416.5 L1787.4,417.4 L1788.4,418.4 L1789.4,419.4 L1790.4,420.4 L1791.4,421.4 L1792.4,422.3 L1793.4,423.2 L1794.4,424.0 L1795.4,424.8 L1796.4,425.5 L1797.4,426.1 L1798.4,426.7 L1799.4,427.2 L1800.4,427.7 L1801.4,428.0 L1802.4,428.3 L1803.4,428.6 L1804.4,428.7 L1805.4,428.8 L1806.4,428.9 L1807.4,428.8 L1808.4,428.7 L1809.4,428.5 L1810.4,428.2 L1811.4,427.8 L1812.4,427.4 L1813.4,426.8 L1814.4,426.2 L1815.4,425.5 L1816.4,424.7 L1817.4,423.9 L1818.4,423.0 L1819.4,422.0 L1820.4,420.9 L1821.4,419.8 L1822.4,418.6 L1823.4,417.4 L1824.4,416.2 L1825.4,414.9 L1826.4,413.5 L1827.4,412.1 L1828.4,410.7 L1829.4,409.3 L1830.4,407.8 L1831.4,406.3 L1832.4,404.9 L1833.4,403.3 L1834.4,401.8 L1835.4,400.3 L1836.4,398.8 L1837.4,397.3 L1838.4,395.8 L1839.4,394.3 L1840.4,392.9 L1841.4,391.4 L1842.4,390.0 L1843.4,388.6 L1844.4,387.3 L1845.4,386.0 L1846.4,384.7 L1847.4,383.5 L1848.4,382.4 L1849.4,381.3 L1850.4,380.2 L1851.4,379.3 L1852.4,378.4 L1853.4,377.6 L1854.4,376.9 L1855.4,376.2 L1856.4,375.7 L1857.4,375.3 L1858.4,374.9 L1859.4,374.6 L1860.4,374.3 L1861.4,374.1 L1862.4,374.0 L1863.4,373.9 L1864.4,373.8 L1865.4,373.8 L1866.4,373.8 L1867.4,373.8 L1868.4,373.9 L1869.4,374.0 L1870.4,374.2 L1871.4,374.5 L1872.4,374.9 L1873.4,375.3 L1874.4,375.9 L1875.4,376.5 L1876.4,377.4 L1877.4,378.3 L1878.4,379.4 L1879.4,380.7 L1880.4,382.2 L1881.4,383.7 L1882.4,385.4 L1883.4,386.9 L1884.4,388.4 L1885.4,389.7 L1886.4,390.9 L1887.4,392.1 L1888.4,393.1 L1889.4,394.1 L1890.4,394.9 L1891.4,395.7 L1892.4,396.4 L1893.4,397.0 L1894.4,397.5 L1895.4,398.0 L1896.4,398.4 L1897.4,398.7 L1898.4,398.9 L1899.4,399.1 L1900.4,399.3 L1901.4,399.3 L1902.4,399.4 L1903.4,399.3 L1904.4,399.2 L1905.4,399.1 L1906.4,398.9 L1907.4,398.7 L1908.4,398.3 L1909.4,397.9 L1910.4,397.5 L1911.4,396.9 L1912.4,396.3 L1913.4,395.7 L1914.4,394.9 L1915.4,394.0 L1916.4,393.1 L1917.4,392.1 L1918.4,391.0 L1919.4,389.8 L1920.4,388.7 L1921.4,387.5 L1922.4,386.3 L1923.4,385.1 L1924.4,383.9 L1925.4,382.7 L1926.4,381.6 L1927.4,380.4 L1928.4,379.2 L1929.4,378.0 L1930.4,376.9 L1931.4,375.7 L1932.4,374.5 L1933.4,373.4 L1934.4,372.2 L1935.4,371.0 L1936.4,369.9 L1937.4,368.7 L1938.4,367.5 L1939.4,366.4 L1940.4,365.2 L1941.4,364.0 L1942.4,362.9 L1943.4,361.7 L1944.4,360.5 L1945.4,359.4 L1946.4,358.2 L1947.4,357.0 L1948.4,355.8 L1949.4,354.6 L1950.4,353.4 L1951.4,352.3 L1952.4,351.1 L1953.4,349.9 L1954.4,348.7 L1955.4,347.5 L1956.4,346.2 L1957.4,345.0 L1958.4,343.8 L1959.4,342.6 L1960.4,341.4 L1961.4,340.1 L1962.4,338.9 L1963.4,337.7 L1964.4,336.4 L1965.4,335.2 L1966.4,333.9 L1967.4,332.7 L1968.4,331.4 L1969.4,330.1 L1970.4,328.9 L1971.4,327.6 L1972.4,326.3 L1973.4,325.0 L1974.4,323.7 L1975.2,322.7" fill="none" stroke="#fba45a" stroke-width="4" opacity="0.35" filter="url(#blur2)"/>
 <path d="M1640.4,479.8 L1641.4,477.5 L1642.4,475.4 L1643.4,473.2 L1644.4,471.2 L1645.4,469.2 L1646.4,467.2 L1647.4,465.3 L1648.4,463.5 L1649.4,461.7 L1650.4,460.0 L1651.4,458.3 L1652.4,456.6 L1653.4,455.0 L1654.4,453.5 L1655.4,452.0 L1656.4,450.5 L1657.4,449.1 L1658.4,447.7 L1659.4,446.3 L1660.4,445.0 L1661.4,443.7 L1662.4,442.4 L1663.4,441.2 L1664.4,440.0 L1665.4,438.9 L1666.4,437.8 L1667.4,436.7 L1668.4,435.7 L1669.4,434.7 L1670.4,433.8 L1671.4,432.9 L1672.4,432.1 L1673.4,431.4 L1674.4,430.7 L1675.4,430.0 L1676.4,429.4 L1677.4,428.9 L1678.4,428.4 L1679.4,428.0 L1680.4,427.7 L1681.4,427.4 L1682.4,427.2 L1683.4,427.0 L1684.4,427.0 L1685.4,427.0 L1686.4,427.0 L1687.4,427.1 L1688.4,427.2 L1689.4,427.4 L1690.4,427.6 L1691.4,427.9 L1692.4,428.2 L1693.4,428.5 L1694.4,428.9 L1695.4,429.2 L1696.4,429.6 L1697.4,430.1 L1698.4,430.5 L1699.4,430.9 L1700.4,431.4 L1701.4,431.8 L1702.4,432.2 L1703.4,432.7 L1704.4,433.1 L1705.4,433.6 L1706.4,434.0 L1707.4,434.4 L1708.4,434.8 L1709.4,435.2 L1710.4,435.6 L1711.4,436.0 L1712.4,436.4 L1713.4,436.8 L1714.4,437.1 L1715.4,437.4 L1716.4,437.8 L1717.4,438.0 L1718.4,438.3 L1719.4,438.6 L1720.4,438.8 L1721.4,439.0 L1722.4,439.1 L1723.4,439.3 L1724.4,439.4 L1725.4,439.5 L1726.4,439.5 L1727.4,439.6 L1728.4,439.6 L1729.4,439.5 L1730.4,439.5 L1731.4,439.4 L1732.4,439.3 L1733.4,439.1 L1734.4,438.9 L1735.4,438.7 L1736.4,438.4 L1737.4,438.2 L1738.4,437.8 L1739.4,437.5 L1740.4,437.1 L1741.4,436.7 L1742.4,436.2 L1743.4,435.8 L1744.4,435.2 L1745.4,434.7 L1746.4,434.1 L1747.4,433.4 L1748.4,432.7 L1749.4,431.8 L1750.4,430.8 L1751.4,429.7 L1752.4,428.4 L1753.4,427.1 L1754.4,425.7 L1755.4,424.4 L1756.4,423.1 L1757.4,421.8 L1758.4,420.7 L1759.4,419.6 L1760.4,418.6 L1761.4,417.7 L1762.4,416.8 L1763.4,416.1 L1764.4,415.4 L1765.4,414.8 L1766.4,414.3 L1767.4,413.8 L1768.4,413.4 L1769.4,413.1 L1770.4,412.8 L1771.4,412.6 L1772.4,412.4 L1773.4,412.2 L1774.4,412.1 L1775.4,412.0 L1776.4,412.0 L1777.4,412.0 L1778.4,412.1 L1779.4,412.2 L1780.4,412.5 L1781.4,412.9 L1782.4,413.4 L1783.4,414.0 L1784.4,414.7 L1785.4,415.6 L1786.4,416.5 L1787.4,417.4 L1788.4,418.4 L1789.4,419.4 L1790.4,420.4 L1791.4,421.4 L1792.4,422.3 L1793.4,423.2 L1794.4,424.0 L1795.4,424.8 L1796.4,425.5 L1797.4,426.1 L1798.4,426.7 L1799.4,427.2 L1800.4,427.7 L1801.4,428.0 L1802.4,428.3 L1803.4,428.6 L1804.4,428.7 L1805.4,428.8 L1806.4,428.9 L1807.4,428.8 L1808.4,428.7 L1809.4,428.5 L1810.4,428.2 L1811.4,427.8 L1812.4,427.4 L1813.4,426.8 L1814.4,426.2 L1815.4,425.5 L1816.4,424.7 L1817.4,423.9 L1818.4,423.0 L1819.4,422.0 L1820.4,420.9 L1821.4,419.8 L1822.4,418.6 L1823.4,417.4 L1824.4,416.2 L1825.4,414.9 L1826.4,413.5 L1827.4,412.1 L1828.4,410.7 L1829.4,409.3 L1830.4,407.8 L1831.4,406.3 L1832.4,404.9 L1833.4,403.3 L1834.4,401.8 L1835.4,400.3 L1836.4,398.8 L1837.4,397.3 L1838.4,395.8 L1839.4,394.3 L1840.4,392.9 L1841.4,391.4 L1842.4,390.0 L1843.4,388.6 L1844.4,387.3 L1845.4,386.0 L1846.4,384.7 L1847.4,383.5 L1848.4,382.4 L1849.4,381.3 L1850.4,380.2 L1851.4,379.3 L1852.4,378.4 L1853.4,377.6 L1854.4,376.9 L1855.4,376.2 L1856.4,375.7 L1857.4,375.3 L1858.4,374.9 L1859.4,374.6 L1860.4,374.3 L1861.4,374.1 L1862.4,374.0 L1863.4,373.9 L1864.4,373.8 L1865.4,373.8 L1866.4,373.8 L1867.4,373.8 L1868.4,373.9 L1869.4,374.0 L1870.4,374.2 L1871.4,374.5 L1872.4,374.9 L1873.4,375.3 L1874.4,375.9 L1875.4,376.5 L1876.4,377.4 L1877.4,378.3 L1878.4,379.4 L1879.4,380.7 L1880.4,382.2 L1881.4,383.7 L1882.4,385.4 L1883.4,386.9 L1884.4,388.4 L1885.4,389.7 L1886.4,390.9 L1887.4,392.1 L1888.4,393.1 L1889.4,394.1 L1890.4,394.9 L1891.4,395.7 L1892.4,396.4 L1893.4,397.0 L1894.4,397.5 L1895.4,398.0 L1896.4,398.4 L1897.4,398.7 L1898.4,398.9 L1899.4,399.1 L1900.4,399.3 L1901.4,399.3 L1902.4,399.4 L1903.4,399.3 L1904.4,399.2 L1905.4,399.1 L1906.4,398.9 L1907.4,398.7 L1908.4,398.3 L1909.4,397.9 L1910.4,397.5 L1911.4,396.9 L1912.4,396.3 L1913.4,395.7 L1914.4,394.9 L1915.4,394.0 L1916.4,393.1 L1917.4,392.1 L1918.4,391.0 L1919.4,389.8 L1920.4,388.7 L1921.4,387.5 L1922.4,386.3 L1923.4,385.1 L1924.4,383.9 L1925.4,382.7 L1926.4,381.6 L1927.4,380.4 L1928.4,379.2 L1929.4,378.0 L1930.4,376.9 L1931.4,375.7 L1932.4,374.5 L1933.4,373.4 L1934.4,372.2 L1935.4,371.0 L1936.4,369.9 L1937.4,368.7 L1938.4,367.5 L1939.4,366.4 L1940.4,365.2 L1941.4,364.0 L1942.4,362.9 L1943.4,361.7 L1944.4,360.5 L1945.4,359.4 L1946.4,358.2 L1947.4,357.0 L1948.4,355.8 L1949.4,354.6 L1950.4,353.4 L1951.4,352.3 L1952.4,351.1 L1953.4,349.9 L1954.4,348.7 L1955.4,347.5 L1956.4,346.2 L1957.4,345.0 L1958.4,343.8 L1959.4,342.6 L1960.4,341.4 L1961.4,340.1 L1962.4,338.9 L1963.4,337.7 L1964.4,336.4 L1965.4,335.2 L1966.4,333.9 L1967.4,332.7 L1968.4,331.4 L1969.4,330.1 L1970.4,328.9 L1971.4,327.6 L1972.4,326.3 L1973.4,325.0 L1974.4,323.7 L1975.2,322.7" fill="none" stroke="#f7901e" stroke-width="1.9"/>
</svg>

<div class="t" style="left:201px;top:349.8px;font-size:24.4px;letter-spacing:0.17px;color:#111">Number of Emails</div>
<div class="t" style="left:201.5px;top:402.3px;font-size:57.1px;font-weight:bold;letter-spacing:-0.8px;color:#1a1a1a">85</div>
<div class="a" style="left:287px;top:422px;width:71px;height:31px;background:#c5f0d4;border-radius:5px"></div>
<div class="t mb" style="left:298px;top:428px;font-size:18px;color:#111">+12%</div>

<div class="t" style="left:1132px;top:349.8px;font-size:24.4px;letter-spacing:0.11px;color:#111">Data Volume</div>
<div class="t" style="left:1132px;top:402.3px;font-size:57.1px;font-weight:bold;letter-spacing:-0.75px;color:#1a1a1a">35.63</div>
<div class="t" style="left:1286px;top:402.3px;font-size:57.1px;font-weight:bold;color:#1a1a1a;transform:scaleX(0.9);transform-origin:0 0">GB</div>
<div class="a" style="left:1380px;top:422px;width:71px;height:31px;background:#c5f0d4;border-radius:5px"></div>
<div class="t mb" style="left:1391px;top:428px;font-size:18px;color:#111">+26%</div>

<!-- chart card -->
<div class="a" style="left:171px;top:531px;width:1831px;height:713px;background:#fff;border:1.5px solid #e6e6e6;border-radius:17px"></div>
<div class="t" style="left:207.5px;top:575.7px;font-size:29.9px;letter-spacing:1.15px;color:#2a2f3b;-webkit-text-stroke:0.8px #2a2f3b">Email Activity</div>

<svg class="a" style="left:0;top:600px" width="2048" height="644" viewBox="0 600 2048 644">
 <g stroke="#ececec" stroke-width="1.6">
  <path d="M296 673.8H1932M296 748.9H1932M296 824H1932M296 899.2H1932M296 974.4H1932M296 1049.2H1932"/>
 </g>
 <g font-family="Liberation Sans" font-size="19" fill="#4f4f4f">
  <text x="239.5" y="677.8" text-anchor="end">300</text>
  <text x="239.5" y="753" text-anchor="end">250</text>
  <text x="239.5" y="828" text-anchor="end">200</text>
  <text x="239.5" y="903.2" text-anchor="end">150</text>
  <text x="239.5" y="978.2" text-anchor="end">100</text>
  <text x="244.5" y="1052.6" text-anchor="end">50</text>
 </g>
 <g font-family="Liberation Sans" font-size="19" fill="#4f4f4f">
<text transform="translate(308.7,1085) rotate(-68)" text-anchor="end">Mar 12</text>
<text transform="translate(366.9,1085) rotate(-68)" text-anchor="end">Mar 13</text>
<text transform="translate(425.1,1085) rotate(-68)" text-anchor="end">Mar 14</text>
<text transform="translate(483.3,1085) rotate(-68)" text-anchor="end">Mar 15</text>
<text transform="translate(541.5,1085) rotate(-68)" text-anchor="end">Mar 16</text>
<text transform="translate(599.7,1085) rotate(-68)" text-anchor="end">Mar 17</text>
<text transform="translate(657.9,1085) rotate(-68)" text-anchor="end">Mar 18</text>
<text transform="translate(716.1,1085) rotate(-68)" text-anchor="end">Mar 19</text>
<text transform="translate(774.3,1085) rotate(-68)" text-anchor="end">Mar 20</text>
<text transform="translate(832.5,1085) rotate(-68)" text-anchor="end">Mar 21</text>
<text transform="translate(890.7,1085) rotate(-68)" text-anchor="end">Mar 22</text>
<text transform="translate(948.9,1085) rotate(-68)" text-anchor="end">Mar 23</text>
<text transform="translate(1007.1,1085) rotate(-68)" text-anchor="end">Mar 24</text>
<text transform="translate(1065.3,1085) rotate(-68)" text-anchor="end">Mar 25</text>
<text transform="translate(1123.5,1085) rotate(-68)" text-anchor="end">Mar 26</text>
<text transform="translate(1181.7,1085) rotate(-68)" text-anchor="end">Mar 27</text>
<text transform="translate(1239.9,1085) rotate(-68)" text-anchor="end">Mar 28</text>
<text transform="translate(1298.1,1085) rotate(-68)" text-anchor="end">Mar 29</text>
<text transform="translate(1356.3,1085) rotate(-68)" text-anchor="end">Mar 30</text>
<text transform="translate(1414.5,1085) rotate(-68)" text-anchor="end">Mar 31</text>
<text transform="translate(1472.7,1085) rotate(-68)" text-anchor="end">Apr 01</text>
<text transform="translate(1530.9,1085) rotate(-68)" text-anchor="end">Apr 02</text>
<text transform="translate(1589.1,1085) rotate(-68)" text-anchor="end">Apr 03</text>
<text transform="translate(1647.3,1085) rotate(-68)" text-anchor="end">Apr 04</text>
<text transform="translate(1705.5,1085) rotate(-68)" text-anchor="end">Apr 05</text>
<text transform="translate(1763.7,1085) rotate(-68)" text-anchor="end">Apr 06</text>
<text transform="translate(1821.9,1085) rotate(-68)" text-anchor="end">Apr 07</text>
<text transform="translate(1880.1,1085) rotate(-68)" text-anchor="end">Apr 08</text>
<text transform="translate(1938.3,1085) rotate(-68)" text-anchor="end">Apr 09</text>
 </g>
 <path d="M300.0,926.0 L302.0,925.9 L304.0,925.8 L306.0,925.7 L308.0,925.5 L310.0,925.4 L312.0,925.3 L314.0,925.2 L316.0,925.1 L318.0,925.0 L319.9,924.9 L321.9,924.8 L323.9,924.6 L325.9,924.5 L327.9,924.4 L329.9,924.3 L331.9,924.2 L333.9,924.1 L335.9,923.9 L337.9,923.8 L339.9,923.7 L341.9,923.6 L343.9,923.5 L345.9,923.4 L347.9,923.2 L349.9,923.1 L351.9,923.0 L353.9,922.9 L356.0,922.8 L358.0,922.7 L360.0,922.5 L362.0,922.4 L364.0,922.3 L366.0,922.2 L368.0,922.1 L370.0,922.0 L372.0,921.9 L374.0,921.8 L376.0,921.7 L378.0,921.6 L380.0,921.5 L382.0,921.4 L384.0,921.3 L386.0,921.2 L388.0,921.1 L390.0,921.0 L392.1,920.9 L394.1,920.8 L396.1,920.8 L398.1,920.7 L400.1,920.6 L402.1,920.5 L404.1,920.4 L406.1,920.4 L408.1,920.3 L410.1,920.2 L412.1,920.2 L414.1,920.1 L416.1,920.1 L418.1,920.0 L420.1,920.0 L422.1,919.9 L424.2,919.9 L426.2,919.8 L428.2,919.8 L430.2,919.8 L432.2,919.8 L434.2,919.7 L436.2,919.7 L438.2,919.7 L440.2,919.7 L442.2,919.7 L444.2,919.7 L446.2,919.7 L448.2,919.7 L450.2,919.7 L452.2,919.7 L454.2,919.8 L456.2,919.8 L458.2,919.8 L460.2,919.8 L462.2,919.9 L464.2,919.9 L466.2,920.0 L468.2,920.0 L470.2,920.1 L472.2,920.2 L474.2,920.3 L476.2,920.3 L478.2,920.4 L480.2,920.5 L482.2,920.6 L484.2,920.7 L486.2,920.8 L488.2,921.0 L490.2,921.1 L492.2,921.2 L494.1,921.3 L496.1,921.5 L498.1,921.6 L500.1,921.8 L502.1,922.0 L504.1,922.1 L506.1,922.3 L508.1,922.5 L510.0,922.7 L512.0,922.9 L514.0,923.1 L516.0,923.3 L518.0,923.5 L520.0,923.8 L521.9,924.0 L523.9,924.2 L525.9,924.5 L527.9,924.8 L529.9,925.0 L531.8,925.3 L533.8,925.6 L535.8,925.9 L537.8,926.2 L539.7,926.5 L541.7,926.8 L543.7,927.1 L545.6,927.5 L547.6,927.8 L549.6,928.2 L551.5,928.5 L553.5,928.9 L555.5,929.3 L557.4,929.7 L559.4,930.1 L561.4,930.5 L563.3,930.9 L565.3,931.3 L567.2,931.8 L569.2,932.2 L571.1,932.7 L573.1,933.1 L575.0,933.6 L577.0,934.1 L578.9,934.6 L580.9,935.1 L582.8,935.6 L584.8,936.2 L586.7,936.7 L588.7,937.2 L590.6,937.8 L592.6,938.3 L594.5,938.9 L596.4,939.4 L598.4,940.0 L600.3,940.5 L602.3,941.1 L604.2,941.6 L606.2,942.2 L608.1,942.7 L610.1,943.2 L612.0,943.8 L613.9,944.3 L615.9,944.8 L617.8,945.3 L619.8,945.8 L621.7,946.2 L623.7,946.7 L625.6,947.1 L627.6,947.6 L629.6,948.0 L631.5,948.4 L633.5,948.7 L635.4,949.1 L637.4,949.4 L639.4,949.7 L641.4,950.0 L643.3,950.2 L645.3,950.4 L647.3,950.6 L649.3,950.8 L651.3,950.9 L653.3,951.0 L655.3,951.1 L657.2,951.2 L659.3,951.2 L661.3,951.1 L663.3,951.1 L665.3,951.0 L667.3,950.8 L669.3,950.6 L671.3,950.4 L673.3,950.2 L675.4,949.9 L677.4,949.6 L679.4,949.2 L681.4,948.9 L683.4,948.4 L685.3,948.0 L687.3,947.5 L689.3,947.0 L691.2,946.5 L693.2,945.9 L695.1,945.3 L697.0,944.7 L699.0,944.0 L700.8,943.3 L702.7,942.6 L704.6,941.8 L706.4,941.1 L708.3,940.3 L710.1,939.4 L711.9,938.6 L713.7,937.7 L715.5,936.8 L717.3,935.9 L719.0,934.9 L720.8,934.0 L722.5,933.0 L724.2,932.0 L726.0,931.0 L727.7,930.0 L729.4,928.9 L731.1,927.9 L732.8,926.8 L734.5,925.7 L736.1,924.6 L737.8,923.5 L739.5,922.4 L741.2,921.2 L742.8,920.1 L744.5,919.0 L746.1,917.8 L747.8,916.7 L749.4,915.5 L751.1,914.4 L752.7,913.2 L754.3,912.0 L756.0,910.9 L757.6,909.7 L759.3,908.5 L760.9,907.4 L762.6,906.2 L764.2,905.1 L765.9,903.9 L767.5,902.8 L769.2,901.6 L770.8,900.5 L772.5,899.4 L774.2,898.3 L775.8,897.2 L777.5,896.1 L779.2,895.0 L780.9,893.9 L782.6,892.9 L784.3,891.8 L786.0,890.8 L787.7,889.8 L789.4,888.8 L791.2,887.9 L792.9,886.9 L794.7,886.0 L796.5,885.1 L798.2,884.2 L800.0,883.3 L801.8,882.5 L803.6,881.6 L805.5,880.8 L807.3,880.0 L809.1,879.3 L810.9,878.5 L812.8,877.8 L814.7,877.1 L816.5,876.4 L818.4,875.7 L820.3,875.0 L822.2,874.4 L824.1,873.8 L826.0,873.2 L827.9,872.6 L829.8,872.0 L831.7,871.5 L833.6,871.0 L835.6,870.5 L837.5,870.0 L839.4,869.5 L841.4,869.0 L843.3,868.6 L845.3,868.2 L847.3,867.8 L849.2,867.4 L851.2,867.0 L853.2,866.7 L855.2,866.3 L857.2,866.0 L859.2,865.7 L861.2,865.4 L863.2,865.2 L865.2,864.9 L867.2,864.7 L869.2,864.5 L871.2,864.3 L873.2,864.1 L875.2,864.0 L877.2,863.8 L879.2,863.7 L881.3,863.6 L883.3,863.5 L885.3,863.4 L887.3,863.4 L889.4,863.3 L891.4,863.3 L893.4,863.3 L895.4,863.4 L897.5,863.4 L899.5,863.5 L901.5,863.5 L903.5,863.6 L905.5,863.7 L907.5,863.9 L909.6,864.0 L911.6,864.2 L913.6,864.4 L915.6,864.6 L917.6,864.8 L919.6,865.1 L921.6,865.4 L923.6,865.7 L925.5,866.0 L927.5,866.3 L929.5,866.7 L931.5,867.0 L933.4,867.4 L935.4,867.8 L937.4,868.3 L939.3,868.7 L941.2,869.2 L943.2,869.7 L945.1,870.2 L947.0,870.8 L948.9,871.3 L950.8,871.9 L952.7,872.5 L954.6,873.1 L956.5,873.8 L958.4,874.5 L960.2,875.2 L962.1,875.9 L963.9,876.6 L965.8,877.4 L967.6,878.2 L969.4,879.0 L971.2,879.8 L973.0,880.6 L974.8,881.5 L976.5,882.4 L978.3,883.3 L980.0,884.3 L981.8,885.2 L983.5,886.2 L985.2,887.2 L986.9,888.2 L988.7,889.2 L990.4,890.2 L992.1,891.3 L993.8,892.3 L995.5,893.4 L997.1,894.5 L998.8,895.6 L1000.5,896.7 L1002.2,897.8 L1003.9,898.9 L1005.5,900.0 L1007.2,901.1 L1008.9,902.3 L1010.6,903.4 L1012.3,904.5 L1013.9,905.6 L1015.6,906.8 L1017.3,907.9 L1019.0,909.0 L1020.7,910.1 L1022.4,911.3 L1024.1,912.4 L1025.8,913.5 L1027.5,914.6 L1029.2,915.7 L1031.0,916.7 L1032.7,917.8 L1034.5,918.9 L1036.2,919.9 L1038.0,920.9 L1039.7,922.0 L1041.5,923.0 L1043.3,923.9 L1045.1,924.9 L1047.0,925.9 L1048.8,926.8 L1050.6,927.7 L1052.5,928.6 L1054.3,929.4 L1056.2,930.2 L1058.1,931.0 L1059.9,931.8 L1061.8,932.5 L1063.7,933.2 L1065.6,933.8 L1067.5,934.4 L1069.4,934.9 L1071.4,935.5 L1073.3,935.9 L1075.2,936.3 L1077.1,936.7 L1079.1,937.0 L1081.0,937.3 L1083.0,937.5 L1084.9,937.6 L1086.9,937.7 L1088.8,937.7 L1090.8,937.7 L1092.8,937.6 L1094.7,937.4 L1096.7,937.2 L1098.6,937.0 L1100.6,936.7 L1102.5,936.3 L1104.5,935.9 L1106.4,935.5 L1108.3,935.0 L1110.3,934.4 L1112.2,933.9 L1114.1,933.2 L1116.0,932.5 L1117.9,931.8 L1119.7,931.1 L1121.6,930.3 L1123.5,929.4 L1125.3,928.5 L1127.1,927.6 L1128.9,926.7 L1130.7,925.7 L1132.5,924.6 L1134.2,923.6 L1136.0,922.5 L1137.7,921.4 L1139.4,920.2 L1141.0,919.0 L1142.7,917.8 L1144.3,916.6 L1145.9,915.3 L1147.4,914.0 L1149.0,912.7 L1150.5,911.4 L1152.0,910.0 L1153.5,908.6 L1154.9,907.2 L1156.3,905.8 L1157.8,904.4 L1159.1,902.9 L1160.5,901.5 L1161.9,900.0 L1163.2,898.5 L1164.6,897.0 L1165.9,895.6 L1167.3,894.1 L1168.6,892.6 L1170.0,891.1 L1171.3,889.6 L1172.6,888.1 L1174.0,886.6 L1175.3,885.2 L1176.7,883.7 L1178.1,882.3 L1179.4,880.8 L1180.8,879.4 L1182.2,878.0 L1183.7,876.6 L1185.1,875.2 L1186.5,873.8 L1187.9,872.4 L1189.4,871.1 L1190.9,869.7 L1192.3,868.4 L1193.8,867.0 L1195.3,865.7 L1196.8,864.4 L1198.3,863.1 L1199.8,861.8 L1201.3,860.5 L1202.8,859.2 L1204.3,857.9 L1205.9,856.6 L1207.4,855.3 L1209.0,854.1 L1210.5,852.8 L1212.1,851.6 L1213.6,850.3 L1215.2,849.1 L1216.8,847.8 L1218.3,846.6 L1219.9,845.4 L1221.5,844.1 L1223.1,842.9 L1224.7,841.7 L1226.3,840.5 L1227.9,839.3 L1229.5,838.0 L1231.1,836.8 L1232.7,835.6 L1234.3,834.4 L1235.9,833.2 L1237.5,832.0 L1239.1,830.9 L1240.8,829.7 L1242.4,828.5 L1244.0,827.3 L1245.7,826.2 L1247.3,825.0 L1249.0,823.9 L1250.6,822.8 L1252.3,821.7 L1254.0,820.6 L1255.7,819.5 L1257.4,818.4 L1259.1,817.4 L1260.9,816.4 L1262.6,815.4 L1264.4,814.4 L1266.2,813.5 L1268.0,812.6 L1269.8,811.7 L1271.6,810.8 L1273.5,810.0 L1275.4,809.1 L1277.2,808.3 L1279.1,807.6 L1281.0,806.9 L1282.9,806.2 L1284.8,805.5 L1286.8,804.9 L1288.7,804.3 L1290.6,803.7 L1292.5,803.2 L1294.5,802.6 L1296.4,802.2 L1298.4,801.7 L1300.3,801.3 L1302.3,801.0 L1304.2,800.6 L1306.2,800.3 L1308.1,800.0 L1310.1,799.8 L1312.0,799.6 L1314.0,799.4 L1316.0,799.2 L1317.9,799.1 L1319.9,799.0 L1321.8,798.9 L1323.8,798.9 L1325.8,798.8 L1327.7,798.9 L1329.7,798.9 L1331.7,799.0 L1333.7,799.0 L1335.6,799.2 L1337.6,799.3 L1339.6,799.5 L1341.5,799.7 L1343.5,799.9 L1345.5,800.1 L1347.4,800.4 L1349.4,800.6 L1351.4,801.0 L1353.3,801.3 L1355.3,801.6 L1357.3,802.0 L1359.2,802.4 L1361.2,802.8 L1363.2,803.3 L1365.1,803.7 L1367.1,804.2 L1369.0,804.7 L1371.0,805.2 L1372.9,805.7 L1374.9,806.3 L1376.8,806.8 L1378.8,807.4 L1380.7,808.0 L1382.7,808.6 L1384.6,809.3 L1386.5,809.9 L1388.5,810.6 L1390.4,811.3 L1392.3,811.9 L1394.3,812.6 L1396.2,813.3 L1398.1,814.0 L1400.0,814.8 L1401.9,815.5 L1403.9,816.2 L1405.8,816.9 L1407.7,817.7 L1409.6,818.4 L1411.5,819.1 L1413.4,819.8 L1415.3,820.5 L1417.3,821.3 L1419.2,822.0 L1421.1,822.7 L1423.0,823.4 L1424.9,824.0 L1426.8,824.7 L1428.7,825.4 L1430.6,826.0 L1432.5,826.6 L1434.4,827.2 L1436.3,827.8 L1438.3,828.4 L1440.2,829.0 L1442.1,829.5 L1444.0,830.0 L1445.9,830.5 L1447.8,831.0 L1449.7,831.4 L1451.6,831.8 L1453.6,832.2 L1455.5,832.6 L1457.4,832.9 L1459.3,833.2 L1461.3,833.4 L1463.2,833.7 L1465.1,833.9 L1467.0,834.0 L1469.0,834.1 L1470.9,834.2 L1472.9,834.2 L1474.8,834.2 L1476.7,834.2 L1478.7,834.1 L1480.6,834.0 L1482.6,833.8 L1484.6,833.5 L1486.5,833.3 L1488.5,833.0 L1490.4,832.6 L1492.4,832.2 L1494.3,831.8 L1496.3,831.3 L1498.3,830.8 L1500.2,830.2 L1502.2,829.6 L1504.1,829.0 L1506.0,828.4 L1508.0,827.7 L1509.9,827.0 L1511.8,826.2 L1513.7,825.4 L1515.6,824.6 L1517.5,823.8 L1519.4,823.0 L1521.3,822.1 L1523.1,821.2 L1525.0,820.2 L1526.8,819.3 L1528.7,818.3 L1530.5,817.3 L1532.3,816.3 L1534.0,815.3 L1535.8,814.3 L1537.6,813.2 L1539.3,812.1 L1541.0,811.1 L1542.7,810.0 L1544.4,808.9 L1546.1,807.7 L1547.7,806.6 L1549.3,805.5 L1550.9,804.3 L1552.5,803.1 L1554.1,801.9 L1555.7,800.7 L1557.2,799.5 L1558.8,798.3 L1560.3,797.0 L1561.8,795.7 L1563.3,794.4 L1564.7,793.1 L1566.2,791.8 L1567.6,790.5 L1569.1,789.1 L1570.5,787.7 L1571.9,786.4 L1573.3,785.0 L1574.6,783.5 L1576.0,782.1 L1577.4,780.7 L1578.7,779.2 L1580.0,777.8 L1581.4,776.3 L1582.7,774.8 L1584.0,773.3 L1585.3,771.8 L1586.5,770.3 L1587.8,768.7 L1589.1,767.2 L1590.3,765.6 L1591.6,764.1 L1592.8,762.5 L1594.1,760.9 L1595.3,759.3 L1596.5,757.7 L1597.7,756.1 L1598.9,754.5 L1600.1,752.9 L1601.3,751.2 L1602.5,749.6 L1603.7,748.0 L1604.9,746.3 L1606.0,744.7 L1607.2,743.0 L1608.4,741.3 L1609.5,739.7 L1610.7,738.0 L1611.8,736.3 L1613.0,734.6 L1614.1,732.9 L1615.3,731.3 L1616.5,729.6 L1617.6,727.9 L1618.8,726.2 L1619.9,724.5 L1621.1,722.9 L1622.3,721.2 L1623.5,719.5 L1624.7,717.9 L1625.9,716.3 L1627.1,714.6 L1628.3,713.0 L1629.6,711.4 L1630.8,709.8 L1632.1,708.3 L1633.4,706.7 L1634.7,705.2 L1636.0,703.7 L1637.4,702.2 L1638.7,700.8 L1640.1,699.4 L1641.6,697.9 L1643.0,696.6 L1644.4,695.2 L1645.9,693.9 L1647.4,692.5 L1648.9,691.2 L1650.4,690.0 L1652.0,688.7 L1653.5,687.5 L1655.1,686.3 L1656.7,685.1 L1658.3,683.9 L1660.0,682.8 L1661.6,681.7 L1663.3,680.6 L1664.9,679.5 L1666.6,678.4 L1668.3,677.4 L1670.0,676.4 L1671.8,675.4 L1673.5,674.4 L1675.3,673.5 L1677.0,672.5 L1678.8,671.6 L1680.6,670.7 L1682.4,669.9 L1684.2,669.0 L1686.0,668.2 L1687.9,667.4 L1689.7,666.6 L1691.5,665.8 L1693.4,665.1 L1695.3,664.3 L1697.1,663.6 L1699.0,662.9 L1700.9,662.3 L1702.8,661.6 L1704.7,661.0 L1706.6,660.4 L1708.5,659.8 L1710.4,659.2 L1712.4,658.6 L1714.3,658.1 L1716.2,657.6 L1718.2,657.1 L1720.1,656.6 L1722.0,656.1 L1724.0,655.7 L1725.9,655.2 L1727.9,654.8 L1729.8,654.4 L1731.8,654.0 L1733.8,653.7 L1735.7,653.3 L1737.7,653.0 L1739.7,652.6 L1741.6,652.3 L1743.6,652.1 L1745.6,651.8 L1747.6,651.5 L1749.5,651.3 L1751.5,651.0 L1753.5,650.8 L1755.5,650.6 L1757.5,650.4 L1759.5,650.3 L1761.5,650.1 L1763.5,649.9 L1765.5,649.8 L1767.5,649.7 L1769.5,649.6 L1771.5,649.5 L1773.5,649.4 L1775.5,649.3 L1777.5,649.2 L1779.5,649.2 L1781.5,649.1 L1783.5,649.1 L1785.5,649.1 L1787.5,649.0 L1789.5,649.0 L1791.5,649.0 L1793.6,649.0 L1795.6,649.1 L1797.6,649.1 L1799.6,649.1 L1801.6,649.2 L1803.6,649.2 L1805.6,649.3 L1807.7,649.3 L1809.7,649.4 L1811.7,649.5 L1813.7,649.6 L1815.7,649.7 L1817.7,649.8 L1819.8,649.9 L1821.8,650.0 L1823.8,650.1 L1825.8,650.2 L1827.8,650.3 L1829.8,650.5 L1831.9,650.6 L1833.9,650.7 L1835.9,650.9 L1837.9,651.0 L1839.9,651.2 L1841.9,651.3 L1843.9,651.5 L1845.9,651.6 L1847.9,651.8 L1850.0,652.0 L1852.0,652.1 L1854.0,652.3 L1856.0,652.5 L1858.0,652.6 L1860.0,652.8 L1862.0,653.0 L1864.0,653.1 L1866.0,653.3 L1868.0,653.5 L1869.9,653.6 L1871.9,653.8 L1873.9,654.0 L1875.9,654.1 L1877.9,654.3 L1879.9,654.4 L1881.8,654.6 L1883.8,654.8 L1885.8,654.9 L1887.8,655.1 L1889.7,655.2 L1891.7,655.4 L1893.7,655.5 L1895.6,655.6 L1897.6,655.8 L1899.5,655.9 L1901.5,656.0" fill="none" stroke="#86a0fb" stroke-width="6.4" stroke-dasharray="20 20" stroke-dashoffset="10"/>
 <path d="M300.4,947.9 L302.4,947.7 L304.3,947.4 L306.3,947.1 L308.3,946.8 L310.3,946.6 L312.2,946.3 L314.2,946.0 L316.2,945.7 L318.2,945.4 L320.2,945.1 L322.1,944.9 L324.1,944.6 L326.1,944.3 L328.1,944.0 L330.1,943.7 L332.0,943.4 L334.0,943.2 L336.0,942.9 L338.0,942.6 L340.0,942.3 L342.0,942.0 L344.0,941.8 L345.9,941.5 L347.9,941.2 L349.9,940.9 L351.9,940.7 L353.9,940.4 L355.9,940.1 L357.9,939.9 L359.9,939.6 L361.8,939.3 L363.8,939.1 L365.8,938.8 L367.8,938.6 L369.8,938.3 L371.8,938.1 L373.8,937.9 L375.8,937.6 L377.8,937.4 L379.8,937.2 L381.8,937.0 L383.7,936.8 L385.7,936.6 L387.7,936.3 L389.7,936.2 L391.7,936.0 L393.7,935.8 L395.7,935.6 L397.7,935.4 L399.7,935.3 L401.7,935.1 L403.7,934.9 L405.7,934.8 L407.7,934.6 L409.7,934.5 L411.7,934.4 L413.7,934.3 L415.7,934.2 L417.7,934.0 L419.7,934.0 L421.7,933.9 L423.7,933.8 L425.7,933.7 L427.7,933.7 L429.7,933.6 L431.7,933.6 L433.7,933.5 L435.7,933.5 L437.7,933.5 L439.7,933.5 L441.7,933.5 L443.7,933.5 L445.7,933.5 L447.6,933.5 L449.6,933.6 L451.6,933.6 L453.6,933.7 L455.6,933.8 L457.6,933.9 L459.6,934.0 L461.6,934.1 L463.6,934.2 L465.6,934.3 L467.6,934.5 L469.6,934.7 L471.6,934.8 L473.6,935.0 L475.6,935.2 L477.6,935.4 L479.6,935.6 L481.6,935.9 L483.6,936.1 L485.6,936.4 L487.6,936.7 L489.6,937.0 L491.6,937.3 L493.6,937.6 L495.6,937.9 L497.6,938.3 L499.6,938.7 L501.6,939.1 L503.5,939.5 L505.5,939.9 L507.5,940.3 L509.4,940.8 L511.4,941.2 L513.3,941.7 L515.3,942.2 L517.2,942.8 L519.1,943.3 L521.1,943.9 L523.0,944.5 L524.9,945.1 L526.8,945.7 L528.7,946.4 L530.5,947.0 L532.4,947.7 L534.3,948.4 L536.1,949.2 L538.0,949.9 L539.8,950.7 L541.6,951.5 L543.4,952.3 L545.2,953.2 L547.0,954.0 L548.8,954.9 L550.6,955.8 L552.3,956.8 L554.1,957.7 L555.8,958.7 L557.5,959.7 L559.2,960.8 L560.9,961.9 L562.5,962.9 L564.2,964.1 L565.8,965.2 L567.4,966.4 L569.1,967.5 L570.7,968.7 L572.3,969.9 L573.9,971.2 L575.4,972.4 L577.0,973.7 L578.6,974.9 L580.2,976.2 L581.7,977.5 L583.3,978.7 L584.9,980.0 L586.4,981.3 L588.0,982.6 L589.6,983.8 L591.2,985.1 L592.8,986.4 L594.4,987.6 L596.0,988.9 L597.6,990.1 L599.2,991.3 L600.8,992.5 L602.5,993.7 L604.1,994.9 L605.8,996.0 L607.5,997.2 L609.1,998.3 L610.8,999.4 L612.6,1000.4 L614.3,1001.5 L616.0,1002.5 L617.8,1003.5 L619.5,1004.5 L621.3,1005.4 L623.1,1006.4 L624.9,1007.3 L626.7,1008.1 L628.5,1009.0 L630.3,1009.8 L632.2,1010.6 L634.0,1011.3 L635.9,1012.0 L637.7,1012.7 L639.6,1013.4 L641.5,1014.0 L643.4,1014.6 L645.3,1015.1 L647.2,1015.6 L649.1,1016.1 L651.0,1016.6 L653.0,1017.0 L654.9,1017.3 L656.8,1017.6 L658.8,1017.9 L660.8,1018.2 L662.7,1018.4 L664.7,1018.5 L666.7,1018.7 L668.7,1018.7 L670.7,1018.8 L672.7,1018.8 L674.7,1018.7 L676.7,1018.6 L678.7,1018.5 L680.7,1018.3 L682.7,1018.0 L684.7,1017.8 L686.7,1017.5 L688.7,1017.1 L690.7,1016.7 L692.7,1016.3 L694.7,1015.8 L696.6,1015.3 L698.6,1014.7 L700.5,1014.1 L702.5,1013.4 L704.4,1012.8 L706.3,1012.0 L708.1,1011.3 L710.0,1010.5 L711.8,1009.6 L713.7,1008.7 L715.5,1007.8 L717.2,1006.9 L719.0,1005.9 L720.7,1004.8 L722.4,1003.8 L724.1,1002.7 L725.7,1001.5 L727.3,1000.3 L728.9,999.1 L730.5,997.9 L732.1,996.6 L733.6,995.3 L735.1,994.0 L736.6,992.7 L738.0,991.3 L739.4,989.9 L740.9,988.5 L742.2,987.0 L743.6,985.5 L744.9,984.0 L746.3,982.5 L747.5,981.0 L748.8,979.4 L750.1,977.8 L751.3,976.2 L752.5,974.6 L753.7,973.0 L754.8,971.4 L756.0,969.7 L757.1,968.1 L758.2,966.4 L759.3,964.7 L760.3,963.0 L761.4,961.3 L762.4,959.6 L763.4,957.9 L764.4,956.1 L765.4,954.4 L766.4,952.7 L767.3,951.0 L768.3,949.2 L769.3,947.5 L770.3,945.8 L771.2,944.0 L772.2,942.3 L773.2,940.6 L774.2,938.9 L775.3,937.1 L776.3,935.4 L777.3,933.7 L778.4,932.0 L779.5,930.4 L780.6,928.7 L781.8,927.0 L783.0,925.4 L784.2,923.8 L785.4,922.1 L786.6,920.5 L787.8,918.9 L789.0,917.3 L790.3,915.7 L791.5,914.1 L792.8,912.4 L794.0,910.8 L795.3,909.2 L796.5,907.6 L797.7,906.0 L798.9,904.4 L800.1,902.7 L801.3,901.1 L802.5,899.4 L803.6,897.8 L804.7,896.1 L805.8,894.4 L806.8,892.7 L807.8,891.0 L808.8,889.3 L809.8,887.5 L810.7,885.8 L811.6,884.0 L812.5,882.3 L813.3,880.5 L814.2,878.7 L815.0,876.9 L815.7,875.1 L816.5,873.2 L817.2,871.4 L817.9,869.6 L818.6,867.7 L819.3,865.8 L820.0,864.0 L820.6,862.1 L821.2,860.2 L821.8,858.3 L822.4,856.4 L823.0,854.5 L823.6,852.6 L824.1,850.7 L824.6,848.8 L825.2,846.8 L825.7,844.9 L826.2,843.0 L826.7,841.0 L827.2,839.1 L827.6,837.1 L828.1,835.2 L828.6,833.2 L829.0,831.2 L829.5,829.3 L830.0,827.3 L830.4,825.3 L830.8,823.4 L831.3,821.4 L831.7,819.4 L832.2,817.5 L832.6,815.5 L833.1,813.5 L833.5,811.6 L834.0,809.6 L834.4,807.6 L834.9,805.7 L835.3,803.7 L835.8,801.7 L836.3,799.8 L836.8,797.8 L837.3,795.9 L837.8,793.9 L838.3,792.0 L838.8,790.0 L839.3,788.1 L839.9,786.2 L840.5,784.2 L841.0,782.3 L841.6,780.4 L842.2,778.5 L842.8,776.6 L843.5,774.7 L844.1,772.8 L844.8,770.9 L845.5,769.0 L846.2,767.2 L846.9,765.3 L847.7,763.5 L848.4,761.6 L849.2,759.8 L850.1,758.0 L850.9,756.2 L851.8,754.4 L852.7,752.6 L853.6,750.8 L854.5,749.0 L855.5,747.3 L856.5,745.6 L857.5,743.8 L858.6,742.2 L859.6,740.5 L860.7,738.8 L861.9,737.2 L863.0,735.5 L864.2,733.9 L865.4,732.4 L866.7,730.8 L867.9,729.3 L869.2,727.8 L870.6,726.3 L871.9,724.8 L873.3,723.4 L874.7,722.0 L876.2,720.6 L877.7,719.3 L879.2,718.0 L880.7,716.7 L882.3,715.5 L883.9,714.2 L885.6,713.1 L887.3,711.9 L889.0,710.8 L890.7,709.7 L892.5,708.7 L894.3,707.7 L896.1,706.8 L898.0,705.9 L899.9,705.0 L901.8,704.2 L903.7,703.5 L905.6,702.9 L907.5,702.3 L909.5,701.7 L911.4,701.3 L913.4,700.9 L915.4,700.6 L917.3,700.4 L919.3,700.3 L921.3,700.3 L923.2,700.3 L925.2,700.5 L927.1,700.7 L929.0,701.0 L931.0,701.5 L932.9,702.0 L934.7,702.5 L936.6,703.2 L938.4,703.9 L940.3,704.7 L942.0,705.6 L943.8,706.6 L945.5,707.6 L947.3,708.6 L948.9,709.8 L950.6,711.0 L952.2,712.2 L953.7,713.5 L955.3,714.9 L956.8,716.3 L958.2,717.7 L959.6,719.2 L961.0,720.7 L962.3,722.3 L963.6,723.9 L964.9,725.5 L966.2,727.1 L967.4,728.7 L968.6,730.4 L969.8,732.0 L971.0,733.7 L972.1,735.4 L973.3,737.0 L974.4,738.7 L975.5,740.4 L976.6,742.0 L977.7,743.7 L978.8,745.3 L979.9,747.0 L980.9,748.6 L982.0,750.3 L983.0,751.9 L984.0,753.6 L985.0,755.3 L986.0,756.9 L987.0,758.6 L988.0,760.3 L988.9,762.0 L989.9,763.7 L990.8,765.4 L991.8,767.1 L992.7,768.8 L993.6,770.5 L994.5,772.2 L995.4,774.0 L996.2,775.8 L997.1,777.5 L998.0,779.3 L998.8,781.1 L999.6,782.9 L1000.5,784.7 L1001.3,786.6 L1002.1,788.4 L1002.9,790.3 L1003.7,792.1 L1004.5,794.0 L1005.3,795.9 L1006.1,797.7 L1006.9,799.6 L1007.6,801.5 L1008.4,803.4 L1009.2,805.3 L1010.0,807.2 L1010.8,809.1 L1011.5,811.1 L1012.3,813.0 L1013.1,814.9 L1013.9,816.8 L1014.7,818.7 L1015.5,820.6 L1016.3,822.5 L1017.1,824.4 L1017.9,826.3 L1018.7,828.2 L1019.5,830.1 L1020.4,832.0 L1021.2,833.9 L1022.0,835.7 L1022.9,837.6 L1023.8,839.4 L1024.7,841.3 L1025.6,843.1 L1026.5,844.9 L1027.4,846.7 L1028.3,848.5 L1029.3,850.3 L1030.3,852.1 L1031.3,853.8 L1032.3,855.6 L1033.3,857.3 L1034.3,859.0 L1035.4,860.7 L1036.5,862.3 L1037.6,864.0 L1038.7,865.6 L1039.8,867.2 L1041.0,868.8 L1042.2,870.4 L1043.4,871.9 L1044.6,873.4 L1045.9,874.9 L1047.2,876.4 L1048.5,877.8 L1049.8,879.3 L1051.2,880.6 L1052.6,882.0 L1054.0,883.3 L1055.5,884.6 L1057.0,885.9 L1058.5,887.2 L1060.0,888.4 L1061.6,889.5 L1063.2,890.7 L1064.9,891.8 L1066.6,892.9 L1068.3,893.9 L1070.0,894.9 L1071.8,895.9 L1073.6,896.8 L1075.4,897.7 L1077.2,898.5 L1079.0,899.3 L1080.9,900.0 L1082.8,900.7 L1084.7,901.4 L1086.6,902.0 L1088.5,902.5 L1090.4,903.0 L1092.3,903.4 L1094.3,903.8 L1096.2,904.1 L1098.1,904.4 L1100.1,904.6 L1102.0,904.7 L1104.0,904.8 L1105.9,904.8 L1107.8,904.7 L1109.8,904.6 L1111.7,904.4 L1113.6,904.1 L1115.5,903.8 L1117.3,903.4 L1119.2,902.9 L1121.0,902.3 L1122.9,901.7 L1124.7,901.0 L1126.5,900.2 L1128.2,899.3 L1130.0,898.4 L1131.7,897.4 L1133.4,896.3 L1135.1,895.2 L1136.8,894.1 L1138.4,892.9 L1140.0,891.6 L1141.6,890.3 L1143.2,888.9 L1144.8,887.5 L1146.3,886.1 L1147.8,884.6 L1149.3,883.1 L1150.7,881.6 L1152.2,880.0 L1153.6,878.4 L1155.0,876.8 L1156.4,875.2 L1157.7,873.6 L1159.0,871.9 L1160.3,870.3 L1161.6,868.6 L1162.8,866.9 L1164.0,865.3 L1165.2,863.6 L1166.4,861.9 L1167.6,860.2 L1168.7,858.5 L1169.8,856.8 L1170.9,855.1 L1172.0,853.3 L1173.0,851.6 L1174.0,849.9 L1175.0,848.1 L1176.0,846.4 L1177.0,844.6 L1177.9,842.9 L1178.9,841.1 L1179.8,839.3 L1180.7,837.6 L1181.6,835.8 L1182.5,834.0 L1183.3,832.2 L1184.2,830.4 L1185.0,828.6 L1185.8,826.8 L1186.6,825.0 L1187.4,823.2 L1188.2,821.4 L1188.9,819.6 L1189.7,817.8 L1190.5,815.9 L1191.2,814.1 L1191.9,812.3 L1192.6,810.4 L1193.4,808.6 L1194.1,806.7 L1194.8,804.9 L1195.5,803.1 L1196.2,801.2 L1196.8,799.4 L1197.5,797.5 L1198.2,795.6 L1198.9,793.8 L1199.5,791.9 L1200.2,790.0 L1200.8,788.2 L1201.5,786.3 L1202.2,784.4 L1202.8,782.6 L1203.5,780.7 L1204.1,778.8 L1204.8,777.0 L1205.4,775.1 L1206.1,773.2 L1206.7,771.3 L1207.4,769.4 L1208.1,767.6 L1208.7,765.7 L1209.4,763.8 L1210.1,761.9 L1210.8,760.0 L1211.5,758.2 L1212.2,756.3 L1212.9,754.4 L1213.6,752.5 L1214.3,750.7 L1215.0,748.8 L1215.7,746.9 L1216.5,745.0 L1217.2,743.1 L1218.0,741.3 L1218.8,739.4 L1219.6,737.5 L1220.4,735.7 L1221.2,733.8 L1222.0,732.0 L1222.8,730.1 L1223.7,728.3 L1224.5,726.4 L1225.4,724.6 L1226.3,722.8 L1227.2,721.0 L1228.1,719.2 L1229.1,717.4 L1230.1,715.6 L1231.0,713.8 L1232.0,712.1 L1233.1,710.4 L1234.1,708.7 L1235.2,707.0 L1236.3,705.3 L1237.4,703.6 L1238.5,702.0 L1239.7,700.4 L1240.9,698.8 L1242.1,697.2 L1243.3,695.6 L1244.6,694.1 L1245.9,692.6 L1247.2,691.1 L1248.5,689.7 L1249.9,688.2 L1251.3,686.9 L1252.7,685.5 L1254.2,684.2 L1255.7,682.8 L1257.2,681.6 L1258.8,680.3 L1260.4,679.1 L1262.0,678.0 L1263.7,676.8 L1265.4,675.7 L1267.1,674.7 L1268.9,673.6 L1270.7,672.6 L1272.5,671.7 L1274.4,670.8 L1276.2,669.9 L1278.1,669.1 L1280.1,668.4 L1282.0,667.6 L1284.0,667.0 L1286.0,666.4 L1287.9,665.8 L1289.9,665.3 L1291.9,664.8 L1293.9,664.5 L1295.9,664.1 L1298.0,663.8 L1300.0,663.6 L1302.0,663.5 L1303.9,663.4 L1305.9,663.4 L1307.9,663.4 L1309.8,663.6 L1311.8,663.7 L1313.7,664.0 L1315.6,664.3 L1317.5,664.6 L1319.4,665.1 L1321.3,665.5 L1323.2,666.1 L1325.0,666.7 L1326.9,667.3 L1328.7,668.0 L1330.5,668.7 L1332.3,669.5 L1334.1,670.3 L1335.9,671.2 L1337.6,672.1 L1339.4,673.1 L1341.1,674.0 L1342.8,675.1 L1344.6,676.1 L1346.2,677.2 L1347.9,678.4 L1349.6,679.5 L1351.3,680.7 L1352.9,681.9 L1354.5,683.2 L1356.1,684.4 L1357.7,685.7 L1359.3,687.0 L1360.9,688.3 L1362.4,689.7 L1364.0,691.0 L1365.5,692.4 L1367.0,693.8 L1368.5,695.2 L1370.0,696.6 L1371.5,698.0 L1372.9,699.5 L1374.4,700.9 L1375.8,702.3 L1377.2,703.8 L1378.6,705.2 L1380.0,706.6 L1381.4,708.1 L1382.7,709.5 L1384.1,711.0 L1385.4,712.4 L1386.8,713.9 L1388.1,715.4 L1389.4,716.8 L1390.7,718.3 L1392.1,719.7 L1393.4,721.2 L1394.7,722.7 L1396.0,724.2 L1397.3,725.6 L1398.6,727.1 L1399.8,728.6 L1401.1,730.1 L1402.4,731.5 L1403.7,733.0 L1405.0,734.5 L1406.3,736.0 L1407.6,737.5 L1408.9,739.0 L1410.3,740.5 L1411.6,741.9 L1412.9,743.4 L1414.2,744.9 L1415.6,746.4 L1416.9,747.9 L1418.3,749.4 L1419.7,750.9 L1421.1,752.4 L1422.4,753.9 L1423.8,755.3 L1425.3,756.8 L1426.7,758.3 L1428.1,759.7 L1429.6,761.2 L1431.0,762.6 L1432.5,764.1 L1433.9,765.5 L1435.4,766.9 L1436.9,768.3 L1438.4,769.6 L1440.0,771.0 L1441.5,772.3 L1443.1,773.6 L1444.6,774.9 L1446.2,776.2 L1447.8,777.5 L1449.4,778.7 L1451.0,779.9 L1452.6,781.1 L1454.3,782.2 L1455.9,783.4 L1457.6,784.5 L1459.3,785.5 L1461.0,786.6 L1462.7,787.6 L1464.4,788.6 L1466.2,789.5 L1467.9,790.4 L1469.7,791.3 L1471.5,792.1 L1473.3,792.9 L1475.1,793.7 L1476.9,794.4 L1478.8,795.1 L1480.7,795.7 L1482.5,796.3 L1484.4,796.8 L1486.4,797.4 L1488.3,797.8 L1490.2,798.2 L1492.2,798.6 L1494.1,799.0 L1496.1,799.3 L1498.1,799.5 L1500.1,799.8 L1502.1,800.0 L1504.1,800.1 L1506.1,800.2 L1508.1,800.3 L1510.1,800.3 L1512.1,800.3 L1514.1,800.3 L1516.2,800.2 L1518.2,800.1 L1520.2,799.9 L1522.2,799.7 L1524.2,799.5 L1526.2,799.2 L1528.2,799.0 L1530.2,798.6 L1532.2,798.3 L1534.2,797.9 L1536.2,797.4 L1538.1,797.0 L1540.1,796.5 L1542.0,795.9 L1544.0,795.4 L1545.9,794.8 L1547.8,794.1 L1549.7,793.5 L1551.6,792.8 L1553.4,792.1 L1555.3,791.3 L1557.1,790.5 L1558.9,789.7 L1560.7,788.9 L1562.5,788.0 L1564.3,787.1 L1566.1,786.2 L1567.8,785.2 L1569.6,784.3 L1571.3,783.3 L1573.0,782.3 L1574.7,781.2 L1576.4,780.2 L1578.1,779.1 L1579.8,778.0 L1581.4,776.9 L1583.1,775.8 L1584.8,774.7 L1586.4,773.5 L1588.0,772.4 L1589.7,771.2 L1591.3,770.0 L1592.9,768.8 L1594.5,767.6 L1596.1,766.4 L1597.8,765.1 L1599.4,763.9 L1600.9,762.6 L1602.5,761.4 L1604.1,760.1 L1605.7,758.9 L1607.3,757.6 L1608.9,756.3 L1610.5,755.1 L1612.1,753.8 L1613.6,752.5 L1615.2,751.2 L1616.8,750.0 L1618.4,748.7 L1620.0,747.4 L1621.6,746.2 L1623.2,744.9 L1624.7,743.7 L1626.3,742.4 L1627.9,741.2 L1629.5,740.0 L1631.1,738.7 L1632.8,737.5 L1634.4,736.3 L1636.0,735.1 L1637.6,734.0 L1639.2,732.8 L1640.9,731.7 L1642.5,730.5 L1644.2,729.4 L1645.9,728.3 L1647.5,727.2 L1649.2,726.2 L1650.9,725.1 L1652.6,724.1 L1654.3,723.1 L1656.0,722.1 L1657.8,721.1 L1659.5,720.2 L1661.3,719.3 L1663.0,718.4 L1664.8,717.5 L1666.6,716.7 L1668.4,715.8 L1670.2,715.0 L1672.0,714.2 L1673.8,713.5 L1675.6,712.7 L1677.5,712.0 L1679.3,711.3 L1681.1,710.6 L1683.0,709.9 L1684.9,709.2 L1686.8,708.6 L1688.6,708.0 L1690.5,707.3 L1692.4,706.8 L1694.3,706.2 L1696.2,705.6 L1698.2,705.1 L1700.1,704.5 L1702.0,704.0 L1703.9,703.5 L1705.9,703.1 L1707.8,702.6 L1709.8,702.1 L1711.7,701.7 L1713.7,701.3 L1715.6,700.9 L1717.6,700.5 L1719.6,700.1 L1721.6,699.7 L1723.5,699.3 L1725.5,699.0 L1727.5,698.7 L1729.5,698.3 L1731.5,698.0 L1733.5,697.7 L1735.5,697.4 L1737.5,697.1 L1739.5,696.9 L1741.5,696.6 L1743.5,696.4 L1745.5,696.1 L1747.5,695.9 L1749.5,695.6 L1751.5,695.4 L1753.6,695.2 L1755.6,695.0 L1757.6,694.8 L1759.6,694.6 L1761.6,694.5 L1763.6,694.3 L1765.6,694.1 L1767.6,694.0 L1769.7,693.8 L1771.7,693.7 L1773.7,693.5 L1775.7,693.4 L1777.7,693.2 L1779.7,693.1 L1781.7,693.0 L1783.7,692.9 L1785.7,692.8 L1787.7,692.7 L1789.7,692.6 L1791.7,692.5 L1793.7,692.4 L1795.7,692.3 L1797.7,692.2 L1799.7,692.1 L1801.7,692.1 L1803.7,692.0 L1805.7,691.9 L1807.7,691.9 L1809.6,691.8 L1811.6,691.8 L1813.6,691.7 L1815.6,691.7 L1817.6,691.6 L1819.6,691.6 L1821.6,691.6 L1823.6,691.6 L1825.6,691.5 L1827.6,691.5 L1829.6,691.5 L1831.5,691.5 L1833.5,691.5 L1835.5,691.5 L1837.5,691.5 L1839.5,691.5 L1841.5,691.5 L1843.5,691.6 L1845.5,691.6 L1847.5,691.6 L1849.5,691.6 L1851.5,691.7 L1853.5,691.7 L1855.5,691.7 L1857.5,691.8 L1859.5,691.8 L1861.5,691.9 L1863.5,692.0 L1865.5,692.0 L1867.5,692.1 L1869.5,692.1 L1871.5,692.2 L1873.5,692.3 L1875.5,692.4 L1877.5,692.4 L1879.5,692.5 L1881.5,692.6 L1883.5,692.7 L1885.5,692.8 L1887.5,692.9 L1889.5,693.0 L1891.6,693.1 L1893.6,693.2 L1895.6,693.3 L1897.6,693.4 L1899.6,693.6 L1901.7,693.7" fill="none" stroke="#1f4fff" stroke-width="6.4"/>
 <rect x="890" y="1191.2" width="47" height="3.6" fill="#1f4fff"/>
 <circle cx="913.5" cy="1193" r="6.3" fill="#1f4fff"/>
 <g fill="#86a0fb"><rect x="1091.5" y="1191.3" width="3.3" height="3.5"/><rect x="1100.8" y="1191.3" width="5.4" height="3.5"/><rect x="1125.6" y="1191.3" width="4.8" height="3.5"/><rect x="1136.9" y="1191.3" width="3" height="3.5"/></g>
 <circle cx="1116.7" cy="1193" r="6.3" fill="#86a0fb"/>
</svg>
<div class="t" style="left:948.5px;top:1183.8px;font-size:18.6px;letter-spacing:-0.33px;color:#444">Sent Email</div>
<div class="t" style="left:1151px;top:1183.8px;font-size:18.6px;letter-spacing:-0.33px;color:#444">Received Email</div>
</body></html>
